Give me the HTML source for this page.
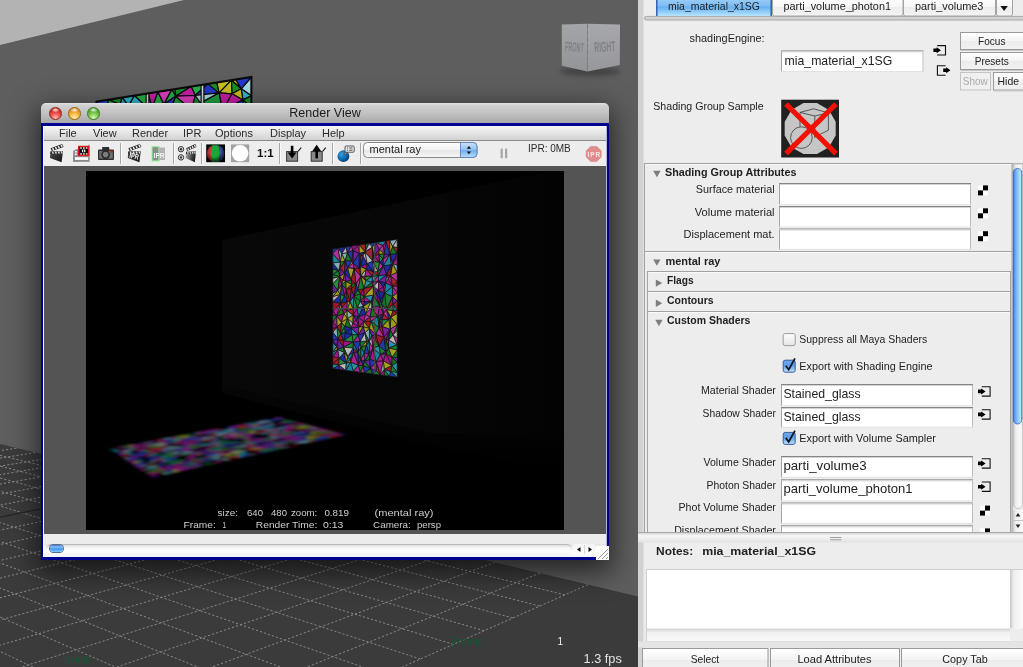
<!DOCTYPE html>
<html><head><meta charset="utf-8">
<style>
html,body{margin:0;padding:0;}
body{width:1023px;height:667px;overflow:hidden;position:relative;background:#ececec;font-family:"Liberation Sans",sans-serif;font-size:11px;color:#222;}
.abs{position:absolute;}
#vp{position:absolute;left:0;top:0;width:638px;height:667px;overflow:hidden;background:#5e5e5e;}
/* ---------- Render View window ---------- */
#rv{position:absolute;left:41px;top:103px;width:568px;height:457px;box-shadow:0 9px 28px 3px rgba(0,0,0,.62);border-radius:5px 5px 0 0;}
#rv .title{position:absolute;left:0;top:0;width:568px;height:20px;border-radius:5px 5px 0 0;background:linear-gradient(#e4e4e4,#d0d0d0 12%,#c2c2c2 50%,#a8a8a8);}
#rv .title .t{position:absolute;left:0;width:568px;top:3px;text-align:center;font-size:12.5px;color:#1a1a1a;}
.tl{position:absolute;top:4px;width:12.6px;height:12.6px;border-radius:50%;box-sizing:border-box;}
#rv .frame{position:absolute;left:0;top:20px;width:568px;height:437px;background:#000092;}
#rv .inner{position:absolute;left:2px;top:3px;width:564px;height:431px;background:#ececec;border-left:1px solid #fff;border-right:1px solid #b4b4d4;box-sizing:border-box;overflow:hidden;}
#rv .menubar{position:absolute;left:0;top:0;width:563px;height:15px;background:linear-gradient(#f6f6f6,#e4e4e4 50%,#d2d2d2);border-bottom:1px solid #8a8a8a;box-sizing:border-box;}
#rv .menubar span{position:absolute;top:1px;font-size:11px;color:#2a2a2a;}
#rv .toolbar{position:absolute;left:0;top:15px;width:563px;height:25px;background:#ededed;}
#rv .sep{position:absolute;top:2px;width:1px;height:21px;background:#a8a8a8;border-right:1px solid #fafafa;}
#rv .canvas{position:absolute;left:0;top:40px;width:563px;height:368px;background:#545454;}
#rv .img{position:absolute;left:42px;top:5px;width:478px;height:359px;background:#000;overflow:hidden;}
#rv .status{position:absolute;margin-top:1.4px;font-size:10px;color:#d0d0d0;white-space:pre;letter-spacing:.35px;}
#rv .bottom{position:absolute;left:0;top:408px;width:563px;height:23px;background:#ececec;}
</style></head>
<body>
<div id="root" style="position:absolute;left:0;top:0;width:1023px;height:667px;opacity:.999;">
<div id="vp">
<svg class="abs" style="left:0;top:0" width="638" height="667" viewBox="0 0 638 667">
  <defs>
    <clipPath id="floorclip"><polygon points="0,444 640,597 640,667 0,667"/></clipPath>
    <linearGradient id="wallg" x1="0" y1="0" x2="1" y2="0"><stop offset="0" stop-color="#5f5f5f"/><stop offset="1" stop-color="#5a5a5a"/></linearGradient>
  </defs>
  <rect x="0" y="0" width="638" height="667" fill="#5e5e5e"/>
  <polygon points="0,0 184,0 0,45" fill="#b3b3b3"/>
  <polygon points="0,444 640,597 640,667 0,667" fill="#3b3b3b"/>
  <g clip-path="url(#floorclip)" stroke="#b8b8b8" stroke-width="1" stroke-dasharray="2.2 2" fill="none" opacity="0.62">
<path d="M610.9 574.5 L-105.5 892.3"/>
<path d="M563.2 563.7 L-184.5 865.4"/>
<path d="M518.5 553.6 L-193.6 817.1"/>
<path d="M476.5 544.1 L-173.4 766.2"/>
<path d="M436.9 535.2 L-181.9 731.6"/>
<path d="M399.6 526.8 L-189.3 701.3"/>
<path d="M364.4 518.8 L-195.9 674.5"/>
<path d="M331.1 511.3 L-180.2 645.0"/>
<path d="M299.5 504.2 L-186.5 624.2"/>
<path d="M269.5 497.4 L-192.2 605.5"/>
<path d="M241.1 491.0 L-197.3 588.4"/>
<path d="M214.0 484.9 L-184.4 569.2"/>
<path d="M163.6 473.5 L-194.0 542.7"/>
<path d="M140.2 468.2 L-198.2 530.9"/>
<path d="M117.7 463.2 L-187.4 517.4"/>
<path d="M96.3 458.3 L-191.5 507.5"/>
<path d="M75.7 453.7 L-195.3 498.3"/>
<path d="M56.0 449.3 L-198.9 489.7"/>
<path d="M37.2 445.0 L-189.5 479.7"/>
<path d="M19.0 440.9 L-193.0 472.3"/>
<path d="M1.6 437.0 L-196.3 465.3"/>
<path d="M-15.1 433.2 L-199.4 458.8"/>
<path d="M-31.3 429.6 L-191.1 451.1"/>
<path d="M-46.8 426.1 L-194.1 445.3"/>
<path d="M564.9 594.9 L-93.6 432.2"/>
<path d="M539.6 606.1 L-118.2 435.4"/>
<path d="M512.8 618.0 L-143.7 438.7"/>
<path d="M484.1 630.7 L-170.0 442.2"/>
<path d="M453.4 644.3 L-197.3 445.7"/>
<path d="M420.4 659.0 L-195.6 459.1"/>
<path d="M385.0 674.7 L-198.5 472.7"/>
<path d="M346.8 691.6 L-196.7 490.1"/>
<path d="M305.5 710.0 L-194.7 510.2"/>
<path d="M260.6 729.9 L-198.2 531.2"/>
<path d="M211.8 751.5 L-195.9 558.9"/>
<path d="M158.4 775.2 L-193.1 592.4"/>
<path d="M99.8 801.2 L-197.7 629.1"/>
<path d="M35.2 829.8 L-194.4 680.3"/>
<path d="M-36.3 861.6 L-190.2 747.0"/>
<path d="M-116.1 897.0 L-196.7 826.8"/>
<path d="M188.2 479.1 L-1913.0 903.6" stroke="#151515" stroke-dasharray="none" stroke-width="1.1" opacity="1"/>
  </g>
<defs><clipPath id="slc"><polygon points="95.6,101.7 251.4,77 251.4,104 95.6,104"/></clipPath></defs>
<g clip-path="url(#slc)" stroke="#0a0a0a" stroke-width="1.2" stroke-linejoin="round">
<polygon points="244.0,200.0 251.4,185.2 251.4,200.0" fill="#28b048"/>
<polygon points="95.6,169.8 95.6,157.5 111.3,165.1" fill="#8a28c8"/>
<polygon points="95.6,190.3 105.4,200.0 95.6,200.0" fill="#8a28c8"/>
<polygon points="109.0,179.9 95.6,169.8 111.3,165.1" fill="#c82030"/>
<polygon points="189.4,148.7 181.8,150.0 176.8,139.2" fill="#e040c0"/>
<polygon points="195.2,95.5 191.1,86.6 207.9,83.9" fill="#28b048"/>
<polygon points="219.2,92.9 195.2,95.5 207.9,83.9" fill="#2238c8"/>
<polygon points="177.6,116.7 169.3,112.8 191.3,109.8" fill="#a8dce4"/>
<polygon points="177.6,116.7 166.0,127.3 169.3,112.8" fill="#18902c"/>
<polygon points="108.8,99.6 105.0,111.7 95.6,101.7" fill="#2a48d8"/>
<polygon points="105.0,111.7 108.8,99.6 120.3,104.5" fill="#28b048"/>
<polygon points="213.8,200.0 203.9,200.0 214.2,188.2" fill="#d028b0"/>
<polygon points="228.2,200.0 213.8,200.0 214.2,188.2" fill="#c82030"/>
<polygon points="162.8,200.0 175.8,185.8 180.6,200.0" fill="#c81fa8"/>
<polygon points="220.4,152.6 229.2,159.8 215.9,158.1" fill="#a8dce4"/>
<polygon points="116.1,188.2 133.1,185.7 127.7,200.0" fill="#1fa040"/>
<polygon points="116.1,188.2 95.6,190.3 109.8,184.4" fill="#d0c828"/>
<polygon points="116.1,188.2 105.4,200.0 95.6,190.3" fill="#28b048"/>
<polygon points="109.0,179.9 95.6,176.8 95.6,169.8" fill="#d0c828"/>
<polygon points="95.6,190.3 95.6,176.8 109.8,184.4" fill="#a8dce4"/>
<polygon points="95.6,176.8 109.0,179.9 109.8,184.4" fill="#8a28c8"/>
<polygon points="133.1,185.7 145.4,189.5 127.7,200.0" fill="#8a28c8"/>
<polygon points="204.3,156.2 220.4,152.6 215.9,158.1" fill="#1fa8c8"/>
<polygon points="216.9,82.5 219.2,92.9 207.9,83.9" fill="#18902c"/>
<polygon points="219.2,92.9 216.9,82.5 231.5,80.2" fill="#c8c020"/>
<polygon points="195.2,95.5 200.6,103.0 191.3,109.8" fill="#18902c"/>
<polygon points="219.2,92.9 200.6,103.0 195.2,95.5" fill="#a8dce4"/>
<polygon points="251.4,95.7 241.2,88.8 251.4,77.0" fill="#a8dce4"/>
<polygon points="241.2,88.8 235.5,79.5 251.4,77.0" fill="#2238c8"/>
<polygon points="241.2,88.8 251.4,95.7 242.9,99.9" fill="#30b8d0"/>
<polygon points="235.5,79.5 241.2,88.8 231.5,80.2" fill="#c8c020"/>
<polygon points="95.6,133.2 105.7,142.8 95.6,145.8" fill="#18902c"/>
<polygon points="189.4,148.7 181.4,160.5 181.8,150.0" fill="#30b8d0"/>
<polygon points="181.8,150.0 167.0,151.2 176.8,139.2" fill="#8a28c8"/>
<polygon points="181.4,160.5 167.0,151.2 181.8,150.0" fill="#c81fa8"/>
<polygon points="160.0,126.1 166.0,127.3 148.5,137.4" fill="#d0c828"/>
<polygon points="166.0,127.3 160.0,126.1 169.3,112.8" fill="#c8c020"/>
<polygon points="160.0,126.1 156.6,111.0 169.3,112.8" fill="#18902c"/>
<polygon points="160.0,126.1 136.1,127.2 139.2,116.2" fill="#c8c020"/>
<polygon points="156.6,111.0 160.0,126.1 139.2,116.2" fill="#28b048"/>
<polygon points="191.1,86.6 175.7,96.2 174.8,89.2" fill="#18902c"/>
<polygon points="175.7,96.2 191.1,86.6 195.2,95.5" fill="#c81fa8"/>
<polygon points="169.3,112.8 175.7,96.2 191.3,109.8" fill="#1fa040"/>
<polygon points="175.7,96.2 195.2,95.5 191.3,109.8" fill="#e040c0"/>
<polygon points="182.3,121.2 177.6,116.7 191.3,109.8" fill="#1fa8c8"/>
<polygon points="166.0,127.3 182.3,121.2 176.8,139.2" fill="#c8c020"/>
<polygon points="177.6,116.7 182.3,121.2 166.0,127.3" fill="#c81fa8"/>
<polygon points="105.0,111.7 95.6,112.3 95.6,101.7" fill="#28b048"/>
<polygon points="95.6,112.3 105.0,111.7 95.6,125.3" fill="#a8dce4"/>
<polygon points="105.0,111.7 112.3,125.2 95.6,125.3" fill="#c81fa8"/>
<polygon points="108.8,99.6 122.0,97.5 120.3,104.5" fill="#18902c"/>
<polygon points="128.7,105.8 122.0,97.5 134.5,95.5" fill="#30b8d0"/>
<polygon points="122.0,97.5 128.7,105.8 120.3,104.5" fill="#1fa8c8"/>
<polygon points="117.5,119.5 105.0,111.7 120.3,104.5" fill="#18902c"/>
<polygon points="117.5,119.5 112.3,125.2 105.0,111.7" fill="#c81fa8"/>
<polygon points="117.5,119.5 136.1,127.2 115.0,129.4" fill="#1fa8c8"/>
<polygon points="112.3,125.2 117.5,119.5 115.0,129.4" fill="#18902c"/>
<polygon points="147.7,107.9 128.7,105.8 134.5,95.5" fill="#30b8d0"/>
<polygon points="128.7,105.8 147.7,107.9 139.2,116.2" fill="#28b048"/>
<polygon points="147.7,107.9 156.6,111.0 139.2,116.2" fill="#c8c020"/>
<polygon points="156.6,111.0 147.7,107.9 152.1,107.6" fill="#c8c020"/>
<polygon points="251.4,95.7 251.4,107.6 242.9,99.9" fill="#18902c"/>
<polygon points="182.9,179.7 181.4,160.5 191.2,176.8" fill="#18902c"/>
<polygon points="205.7,176.8 212.1,177.1 214.2,188.2" fill="#1fa040"/>
<polygon points="212.1,177.1 205.7,176.8 215.9,158.1" fill="#c81fa8"/>
<polygon points="212.1,177.1 228.3,183.8 214.2,188.2" fill="#28b048"/>
<polygon points="228.3,183.8 228.2,200.0 214.2,188.2" fill="#c8c020"/>
<polygon points="228.2,200.0 228.3,183.8 244.0,200.0" fill="#c8c020"/>
<polygon points="251.4,142.7 251.4,162.4 242.6,161.1" fill="#d0c828"/>
<polygon points="251.4,142.7 237.8,141.7 251.4,136.8" fill="#c8c020"/>
<polygon points="237.8,141.7 251.4,142.7 242.6,161.1" fill="#c81fa8"/>
<polygon points="118.7,200.0 116.1,188.2 127.7,200.0" fill="#e040c0"/>
<polygon points="116.1,188.2 118.7,200.0 105.4,200.0" fill="#c82030"/>
<polygon points="145.4,189.5 146.9,200.0 127.7,200.0" fill="#c82030"/>
<polygon points="146.9,200.0 145.4,189.5 154.3,200.0" fill="#28b048"/>
<polygon points="150.9,187.8 162.8,200.0 154.3,200.0" fill="#c81fa8"/>
<polygon points="145.4,189.5 150.9,187.8 154.3,200.0" fill="#c81fa8"/>
<polygon points="146.2,163.2 157.6,161.7 160.1,176.1" fill="#30b8d0"/>
<polygon points="145.4,181.1 145.4,189.5 133.1,185.7" fill="#e040c0"/>
<polygon points="135.0,180.4 145.4,181.1 133.1,185.7" fill="#1fa040"/>
<polygon points="145.4,181.1 150.9,187.8 145.4,189.5" fill="#2a48d8"/>
<polygon points="150.9,187.8 145.4,181.1 160.1,176.1" fill="#c81fa8"/>
<polygon points="145.4,181.1 146.2,163.2 160.1,176.1" fill="#8a28c8"/>
<polygon points="122.4,168.4 109.0,179.9 111.3,165.1" fill="#8a28c8"/>
<polygon points="116.1,188.2 122.9,175.8 133.1,185.7" fill="#18902c"/>
<polygon points="122.9,175.8 135.0,180.4 133.1,185.7" fill="#a8dce4"/>
<polygon points="109.0,179.9 122.9,175.8 109.8,184.4" fill="#18902c"/>
<polygon points="122.9,175.8 116.1,188.2 109.8,184.4" fill="#a8dce4"/>
<polygon points="122.4,168.4 122.9,175.8 109.0,179.9" fill="#2a48d8"/>
<polygon points="199.9,147.6 204.3,156.2 189.4,148.7" fill="#c8c020"/>
<polygon points="204.3,156.2 199.9,147.6 220.4,152.6" fill="#e040c0"/>
<polygon points="199.9,147.6 227.4,137.5 220.4,152.6" fill="#d028b0"/>
<polygon points="219.6,129.3 199.9,147.6 202.7,131.2" fill="#c8c020"/>
<polygon points="199.9,147.6 219.6,129.3 227.4,137.5" fill="#c81fa8"/>
<polygon points="207.1,117.7 219.6,129.3 202.7,131.2" fill="#8a28c8"/>
<polygon points="232.1,93.8 219.2,92.9 231.5,80.2" fill="#c8c020"/>
<polygon points="241.2,88.8 232.1,93.8 231.5,80.2" fill="#18902c"/>
<polygon points="232.1,93.8 241.2,88.8 242.9,99.9" fill="#c8c020"/>
<polygon points="110.5,151.6 95.6,157.5 95.6,145.8" fill="#28b048"/>
<polygon points="105.7,142.8 110.5,151.6 95.6,145.8" fill="#2238c8"/>
<polygon points="95.6,157.5 110.5,151.6 111.3,165.1" fill="#18902c"/>
<polygon points="116.3,139.6 110.5,151.6 105.7,142.8" fill="#18902c"/>
<polygon points="136.1,127.2 116.3,139.6 115.0,129.4" fill="#d0c828"/>
<polygon points="116.3,139.6 105.7,142.8 115.0,129.4" fill="#28b048"/>
<polygon points="157.6,161.7 167.4,166.2 160.1,176.1" fill="#8a28c8"/>
<polygon points="167.4,166.2 167.0,151.2 181.4,160.5" fill="#c81fa8"/>
<polygon points="204.3,156.2 196.0,163.5 189.4,148.7" fill="#d028b0"/>
<polygon points="196.0,163.5 181.4,160.5 189.4,148.7" fill="#1fa8c8"/>
<polygon points="181.4,160.5 196.0,163.5 191.2,176.8" fill="#30b8d0"/>
<polygon points="196.0,163.5 205.7,176.8 191.2,176.8" fill="#d028b0"/>
<polygon points="196.0,163.5 204.3,156.2 215.9,158.1" fill="#d028b0"/>
<polygon points="205.7,176.8 196.0,163.5 215.9,158.1" fill="#c81fa8"/>
<polygon points="167.0,151.2 167.8,138.1 176.8,139.2" fill="#d0c828"/>
<polygon points="167.8,138.1 166.0,127.3 176.8,139.2" fill="#8a28c8"/>
<polygon points="166.0,127.3 167.8,138.1 148.5,137.4" fill="#d028b0"/>
<polygon points="159.1,156.7 146.2,163.2 143.1,157.9" fill="#a8dce4"/>
<polygon points="146.2,163.2 159.1,156.7 157.6,161.7" fill="#18902c"/>
<polygon points="159.1,156.7 167.4,166.2 157.6,161.7" fill="#c81fa8"/>
<polygon points="167.4,166.2 159.1,156.7 167.0,151.2" fill="#1fa040"/>
<polygon points="146.1,133.4 160.0,126.1 148.5,137.4" fill="#1fa040"/>
<polygon points="160.0,126.1 146.1,133.4 136.1,127.2" fill="#1fa8c8"/>
<polygon points="175.7,96.2 171.8,89.6 174.8,89.2" fill="#1fa040"/>
<polygon points="157.9,91.8 163.9,104.2 152.1,107.6" fill="#28b048"/>
<polygon points="163.9,104.2 156.6,111.0 152.1,107.6" fill="#c8c020"/>
<polygon points="171.8,89.6 163.9,104.2 157.9,91.8" fill="#e040c0"/>
<polygon points="163.9,104.2 171.8,89.6 175.7,96.2" fill="#28b048"/>
<polygon points="156.6,111.0 163.9,104.2 169.3,112.8" fill="#2238c8"/>
<polygon points="163.9,104.2 175.7,96.2 169.3,112.8" fill="#2238c8"/>
<polygon points="182.3,121.2 194.0,127.2 176.8,139.2" fill="#8a28c8"/>
<polygon points="194.0,127.2 207.1,117.7 202.7,131.2" fill="#2238c8"/>
<polygon points="108.4,128.5 95.6,133.2 95.6,125.3" fill="#d028b0"/>
<polygon points="112.3,125.2 108.4,128.5 95.6,125.3" fill="#2a48d8"/>
<polygon points="108.4,128.5 112.3,125.2 115.0,129.4" fill="#c81fa8"/>
<polygon points="105.7,142.8 108.4,128.5 115.0,129.4" fill="#1fa040"/>
<polygon points="108.4,128.5 105.7,142.8 95.6,133.2" fill="#a8dce4"/>
<polygon points="128.7,105.8 128.2,116.1 120.3,104.5" fill="#d028b0"/>
<polygon points="128.2,116.1 117.5,119.5 120.3,104.5" fill="#30b8d0"/>
<polygon points="128.2,116.1 128.7,105.8 139.2,116.2" fill="#c81fa8"/>
<polygon points="136.1,127.2 128.2,116.1 139.2,116.2" fill="#1fa040"/>
<polygon points="117.5,119.5 128.2,116.1 136.1,127.2" fill="#a8dce4"/>
<polygon points="148.0,93.4 147.7,107.9 134.5,95.5" fill="#28b048"/>
<polygon points="148.0,93.4 157.9,91.8 152.1,107.6" fill="#c81fa8"/>
<polygon points="147.7,107.9 148.0,93.4 152.1,107.6" fill="#8a28c8"/>
<polygon points="235.7,135.7 251.4,122.9 251.4,136.8" fill="#d028b0"/>
<polygon points="237.8,141.7 235.7,135.7 251.4,136.8" fill="#d0c828"/>
<polygon points="235.7,135.7 237.8,141.7 227.4,137.5" fill="#18902c"/>
<polygon points="219.6,129.3 235.7,135.7 227.4,137.5" fill="#18902c"/>
<polygon points="229.2,159.8 228.7,146.9 242.6,161.1" fill="#c82030"/>
<polygon points="228.7,146.9 237.8,141.7 242.6,161.1" fill="#c82030"/>
<polygon points="228.7,146.9 229.2,159.8 220.4,152.6" fill="#c81fa8"/>
<polygon points="227.4,137.5 228.7,146.9 220.4,152.6" fill="#28b048"/>
<polygon points="237.8,141.7 228.7,146.9 227.4,137.5" fill="#c8c020"/>
<polygon points="251.4,107.6 243.6,117.0 242.9,99.9" fill="#28b048"/>
<polygon points="243.6,117.0 251.4,107.6 251.4,122.9" fill="#c8c020"/>
<polygon points="235.7,135.7 243.6,117.0 251.4,122.9" fill="#1fa8c8"/>
<polygon points="203.9,200.0 198.8,186.9 214.2,188.2" fill="#30b8d0"/>
<polygon points="198.8,186.9 205.7,176.8 214.2,188.2" fill="#d028b0"/>
<polygon points="205.7,176.8 198.8,186.9 191.2,176.8" fill="#1fa8c8"/>
<polygon points="243.5,180.8 251.4,185.2 244.0,200.0" fill="#30b8d0"/>
<polygon points="228.3,183.8 243.5,180.8 244.0,200.0" fill="#c8c020"/>
<polygon points="228.2,175.3 228.3,183.8 212.1,177.1" fill="#28b048"/>
<polygon points="228.2,175.3 212.1,177.1 215.9,158.1" fill="#1fa8c8"/>
<polygon points="229.2,159.8 228.2,175.3 215.9,158.1" fill="#c82030"/>
<polygon points="164.8,183.3 175.8,185.8 162.8,200.0" fill="#e040c0"/>
<polygon points="150.9,187.8 164.8,183.3 162.8,200.0" fill="#a8dce4"/>
<polygon points="164.8,183.3 150.9,187.8 160.1,176.1" fill="#2238c8"/>
<polygon points="164.8,183.3 182.9,179.7 175.8,185.8" fill="#28b048"/>
<polygon points="133.5,166.8 145.4,181.1 135.0,180.4" fill="#c81fa8"/>
<polygon points="145.4,181.1 133.5,166.8 146.2,163.2" fill="#d0c828"/>
<polygon points="122.9,175.8 133.5,166.8 135.0,180.4" fill="#d028b0"/>
<polygon points="133.5,166.8 122.9,175.8 122.4,168.4" fill="#c81fa8"/>
<polygon points="146.2,163.2 133.5,166.8 143.1,157.9" fill="#d028b0"/>
<polygon points="133.5,166.8 135.0,151.5 143.1,157.9" fill="#1fa040"/>
<polygon points="133.5,166.8 122.4,168.4 135.0,151.5" fill="#e040c0"/>
<polygon points="200.6,103.0 203.3,112.5 191.3,109.8" fill="#1fa8c8"/>
<polygon points="194.0,127.2 203.3,112.5 207.1,117.7" fill="#a8dce4"/>
<polygon points="203.3,112.5 182.3,121.2 191.3,109.8" fill="#e040c0"/>
<polygon points="203.3,112.5 194.0,127.2 182.3,121.2" fill="#18902c"/>
<polygon points="128.0,144.4 146.1,133.4 148.5,137.4" fill="#d0c828"/>
<polygon points="128.0,144.4 116.3,139.6 136.1,127.2" fill="#1fa040"/>
<polygon points="146.1,133.4 128.0,144.4 136.1,127.2" fill="#c81fa8"/>
<polygon points="167.4,166.2 167.8,172.2 160.1,176.1" fill="#a8dce4"/>
<polygon points="167.8,172.2 164.8,183.3 160.1,176.1" fill="#c81fa8"/>
<polygon points="164.8,183.3 167.8,172.2 182.9,179.7" fill="#28b048"/>
<polygon points="182.9,179.7 167.8,172.2 181.4,160.5" fill="#8a28c8"/>
<polygon points="167.8,172.2 167.4,166.2 181.4,160.5" fill="#1fa8c8"/>
<polygon points="151.0,145.4 159.1,156.7 143.1,157.9" fill="#1fa040"/>
<polygon points="135.0,151.5 151.0,145.4 143.1,157.9" fill="#d028b0"/>
<polygon points="159.1,156.7 151.0,145.4 167.0,151.2" fill="#18902c"/>
<polygon points="151.0,145.4 128.0,144.4 148.5,137.4" fill="#2a48d8"/>
<polygon points="128.0,144.4 151.0,145.4 135.0,151.5" fill="#28b048"/>
<polygon points="167.8,138.1 151.0,145.4 148.5,137.4" fill="#a8dce4"/>
<polygon points="151.0,145.4 167.8,138.1 167.0,151.2" fill="#c82030"/>
<polygon points="194.0,127.2 194.8,136.2 176.8,139.2" fill="#1fa8c8"/>
<polygon points="194.8,136.2 194.0,127.2 202.7,131.2" fill="#c8c020"/>
<polygon points="194.8,136.2 189.4,148.7 176.8,139.2" fill="#d0c828"/>
<polygon points="199.9,147.6 194.8,136.2 202.7,131.2" fill="#c82030"/>
<polygon points="194.8,136.2 199.9,147.6 189.4,148.7" fill="#a8dce4"/>
<polygon points="225.8,121.9 235.7,135.7 219.6,129.3" fill="#a8dce4"/>
<polygon points="225.8,121.9 243.6,117.0 235.7,135.7" fill="#28b048"/>
<polygon points="187.4,200.0 198.8,186.9 203.9,200.0" fill="#c82030"/>
<polygon points="243.5,180.8 251.4,175.8 251.4,185.2" fill="#c8c020"/>
<polygon points="238.6,174.5 243.5,180.8 228.3,183.8" fill="#8a28c8"/>
<polygon points="228.2,175.3 238.6,174.5 228.3,183.8" fill="#c82030"/>
<polygon points="238.6,174.5 251.4,175.8 243.5,180.8" fill="#c81fa8"/>
<polygon points="238.6,174.5 229.2,159.8 242.6,161.1" fill="#2a48d8"/>
<polygon points="238.6,174.5 228.2,175.3 229.2,159.8" fill="#2238c8"/>
<polygon points="251.4,175.8 238.6,174.5 251.4,162.4" fill="#a8dce4"/>
<polygon points="251.4,162.4 238.6,174.5 242.6,161.1" fill="#d028b0"/>
<polygon points="222.6,110.6 200.6,103.0 219.2,92.9" fill="#1fa040"/>
<polygon points="232.1,93.8 222.6,110.6 219.2,92.9" fill="#c81fa8"/>
<polygon points="222.6,110.6 232.1,93.8 242.9,99.9" fill="#c81fa8"/>
<polygon points="243.6,117.0 222.6,110.6 242.9,99.9" fill="#2238c8"/>
<polygon points="225.8,121.9 222.6,110.6 243.6,117.0" fill="#2a48d8"/>
<polygon points="116.3,139.6 118.9,151.3 110.5,151.6" fill="#2a48d8"/>
<polygon points="128.0,144.4 118.9,151.3 116.3,139.6" fill="#c81fa8"/>
<polygon points="118.9,151.3 128.0,144.4 135.0,151.5" fill="#18902c"/>
<polygon points="110.5,151.6 118.9,151.3 111.3,165.1" fill="#18902c"/>
<polygon points="118.9,151.3 122.4,168.4 111.3,165.1" fill="#c82030"/>
<polygon points="122.4,168.4 118.9,151.3 135.0,151.5" fill="#c81fa8"/>
<polygon points="188.3,184.2 187.4,200.0 180.6,200.0" fill="#8a28c8"/>
<polygon points="175.8,185.8 188.3,184.2 180.6,200.0" fill="#18902c"/>
<polygon points="187.4,200.0 188.3,184.2 198.8,186.9" fill="#c8c020"/>
<polygon points="182.9,179.7 188.3,184.2 175.8,185.8" fill="#8a28c8"/>
<polygon points="188.3,184.2 182.9,179.7 191.2,176.8" fill="#d0c828"/>
<polygon points="198.8,186.9 188.3,184.2 191.2,176.8" fill="#e040c0"/>
<polygon points="203.3,112.5 211.0,114.5 207.1,117.7" fill="#e040c0"/>
<polygon points="211.0,114.5 203.3,112.5 200.6,103.0" fill="#1fa040"/>
<polygon points="222.6,110.6 211.0,114.5 200.6,103.0" fill="#2a48d8"/>
<polygon points="219.9,116.8 222.6,110.6 225.8,121.9" fill="#28b048"/>
<polygon points="219.9,116.8 211.0,114.5 222.6,110.6" fill="#2238c8"/>
<polygon points="211.0,114.5 219.9,116.8 207.1,117.7" fill="#d028b0"/>
<polygon points="207.1,117.7 219.9,116.8 219.6,129.3" fill="#c82030"/>
<polygon points="219.9,116.8 225.8,121.9 219.6,129.3" fill="#a8dce4"/>
<path d="M147.5,80 V104 M202.5,80 V104" stroke="#0a0a0a" stroke-width="4"/><path d="M147.5,80 V104 M202.5,80 V104" stroke="#d8d8d8" stroke-width="1.6"/>
</g>
<path d="M95.6,101.7 L251.4,77 V104" fill="none" stroke="#0a0a0a" stroke-width="2"/>
</svg>
<svg class="abs" style="left:540px;top:10px" width="98" height="80" viewBox="540 10 98 80">
<defs>
<linearGradient id="vcl" x1="0" y1="0" x2="0" y2="1"><stop offset="0" stop-color="#a4a5a9"/><stop offset="1" stop-color="#939498"/></linearGradient>
<linearGradient id="vcr" x1="0" y1="0" x2="0" y2="1"><stop offset="0" stop-color="#a7a8ac"/><stop offset="1" stop-color="#96979b"/></linearGradient>
<filter id="vcb" x="-30%" y="-100%" width="160%" height="300%"><feGaussianBlur stdDeviation="2.6"/></filter>
</defs>
<ellipse cx="590" cy="71.5" rx="31" ry="4.2" fill="#3c3c3c" opacity=".85" filter="url(#vcb)"/>
<polygon points="561.8,24.6 587.5,23.8 587.5,71.6 561.8,65.8" fill="url(#vcl)"/>
<polygon points="587.5,23.8 620,24.6 619.8,65 587.5,71.6" fill="url(#vcr)"/>
<path d="M587.5,24 V71.4" stroke="#7c7d82" stroke-width="1" stroke-dasharray="5 1.5"/>
<text x="565" y="51.8" font-family="Liberation Sans" font-weight="bold" font-size="13.6" fill="#7f8085" textLength="19" lengthAdjust="spacingAndGlyphs" transform="rotate(4 575 48)">FRONT</text>
<text x="594.4" y="51.6" font-family="Liberation Sans" font-weight="bold" font-size="14.4" fill="#7f8085" textLength="21" lengthAdjust="spacingAndGlyphs" transform="rotate(-3 605 48)">RIGHT</text>
</svg>

<svg class="abs" style="left:0;top:620px" width="638" height="47" viewBox="0 620 638 47" font-family="Liberation Sans">
<text x="67" y="663" font-size="10" fill="#0e5a32" textLength="23.5" lengthAdjust="spacingAndGlyphs">persp</text>
<text x="451.6" y="644.6" font-size="10" fill="#0e5a32" textLength="31.6" lengthAdjust="spacingAndGlyphs">Frame:</text>
<text x="557.4" y="644.6" font-size="10" fill="#f2f2f2">1</text>
<text x="583.6" y="663.2" font-size="13.4" fill="#e4e4e4" textLength="38.2" lengthAdjust="spacingAndGlyphs">1.3 fps</text>
</svg>

</div>

<div id="rv">
  <div class="title">
    <div class="tl" style="left:8px;background:radial-gradient(ellipse 4px 2.4px at 50% 18%,rgba(255,255,255,.9),rgba(255,255,255,0) 100%),radial-gradient(circle at 50% 88%,#ffb8b0 0,#ee4a44 45%,#b01510 100%);border:1px solid #8e2a24;"></div>
    <div class="tl" style="left:27px;background:radial-gradient(ellipse 4px 2.4px at 50% 18%,rgba(255,255,255,.9),rgba(255,255,255,0) 100%),radial-gradient(circle at 50% 88%,#fff4a8 0,#f5b43c 45%,#c47414 100%);border:1px solid #9a6418;"></div>
    <div class="tl" style="left:46px;background:radial-gradient(ellipse 4px 2.4px at 50% 18%,rgba(255,255,255,.9),rgba(255,255,255,0) 100%),radial-gradient(circle at 50% 88%,#dcfab0 0,#78c44c 45%,#38881c 100%);border:1px solid #3e7a24;"></div>
    <div class="t">Render View</div>
  </div>
  <div class="frame"><div class="inner">
    <div class="menubar">
      <span style="left:15px">File</span><span style="left:49px">View</span><span style="left:88px">Render</span><span style="left:139px">IPR</span><span style="left:171px">Options</span><span style="left:226px">Display</span><span style="left:278px">Help</span>
    </div>
    <div class="toolbar">
<svg class="abs" style="left:0;top:0" width="563" height="25" viewBox="44 141 563 25">
  <defs>
    <linearGradient id="clapg2" x1="0" y1="0" x2="1" y2=".3"><stop offset="0" stop-color="#b8b8b8"/><stop offset=".6" stop-color="#555"/><stop offset="1" stop-color="#1a1a1a"/></linearGradient>
    <linearGradient id="clapg" x1="0" y1="0" x2="1" y2="1"><stop offset="0" stop-color="#4a4a4a"/><stop offset="1" stop-color="#141414"/></linearGradient>
    <radialGradient id="blueball" cx=".35" cy=".35" r=".7"><stop offset="0" stop-color="#3aa0e0"/><stop offset=".6" stop-color="#0a68b0"/><stop offset="1" stop-color="#043a70"/></radialGradient>
    <radialGradient id="ballshade" cx=".45" cy=".4" r=".6"><stop offset=".5" stop-color="#000" stop-opacity="0"/><stop offset="1" stop-color="#000" stop-opacity=".75"/></radialGradient>
    <clipPath id="ballclip"><circle cx="215.5" cy="153.3" r="8.6"/></clipPath>
    <linearGradient id="ddg" x1="0" y1="0" x2="0" y2="1"><stop offset="0" stop-color="#fefefe"/><stop offset=".5" stop-color="#f2f2f2"/><stop offset=".5" stop-color="#e6e6e6"/><stop offset="1" stop-color="#f6f6f6"/></linearGradient>
    <linearGradient id="ddb" x1="0" y1="0" x2="0" y2="1"><stop offset="0" stop-color="#cfe4fa"/><stop offset=".5" stop-color="#8fbff2"/><stop offset=".5" stop-color="#6facee"/><stop offset="1" stop-color="#b6dcfc"/></linearGradient>
    <g id="clap">
      <polygon points="0.5,7.6 12.9,7.4 11.6,18.2 0,13.9" fill="url(#clapg)"/>
      <polygon points="0.6,4.2 12.1,0 13.6,2.9 1.9,7" fill="#262626"/>
      <path d="M2.6,4.2 L3.8,6.3 M5.4,3.1 L6.6,5.2 M8.2,2 L9.4,4.1 M11,0.9 L12.2,3" stroke="#ececec" stroke-width="1.5"/>
      <polygon points="0.5,7.6 12.9,7.4 12.7,9.6 0.4,9.9" fill="#2c2c2c"/>
      <path d="M2.4,7.7 L3.4,9.7 M5.4,7.6 L6.4,9.6 M8.4,7.6 L9.4,9.6 M11.2,7.5 L12.2,9.5" stroke="#e4e4e4" stroke-width="1.4"/>
    </g>
  </defs>
  <!-- 1 clapper -->
  <use href="#clap" x="50" y="144"/>
  <!-- 2 film + red box -->
  <polygon points="73.2,150.8 78.4,148.4 78.4,161.8 73.2,161.8" fill="#8a8a8a"/>
  <rect x="73.2" y="155.6" width="16.3" height="6.2" fill="#8a8a8a"/>
  <polygon points="89.5,144.2 89.5,161.8 88.2,161.8 88.2,145" fill="#9a9a9a"/>
  <rect x="74.9" y="157.2" width="13.1" height="2.7" fill="#fff"/>
  <rect x="74.9" y="151" width="1.9" height="1.6" fill="#f4f4f4"/><rect x="74.9" y="153.5" width="1.9" height="1.6" fill="#f4f4f4"/>
  <rect x="78.2" y="145.9" width="11" height="10.1" fill="#0c0c0c"/>
  <path d="M80.2,148 h1.7 M83,148 h1.7 M85.8,148 h1.7 M80.2,154 h1.7 M83,154 h1.7 M85.8,154 h1.7" stroke="#f4f4f4" stroke-width="1.6"/>
  <path d="M82,149.6 h3.4 v2.6 h-3.4 z" fill="#f4f4f4"/><path d="M83.6,149.6 v2.6" stroke="#0c0c0c" stroke-width=".9"/>
  <rect x="78.8" y="146.5" width="9.8" height="8.9" fill="none" stroke="#f01616" stroke-width="1.3"/>
  <!-- 3 camera -->
  <rect x="98" y="149.4" width="16" height="10.6" rx="1" fill="#2e2e2e"/>
  <rect x="102.2" y="147" width="7" height="3.2" fill="#2e2e2e"/>
  <rect x="99.2" y="151" width="13.6" height="7.6" fill="#6e6e6e"/>
  <circle cx="105.6" cy="154.6" r="4.3" fill="#242424"/>
  <circle cx="105.6" cy="154.6" r="2.8" fill="#7c7c7c"/>
  <rect x="110.4" y="150.4" width="2.2" height="2" fill="#e01010"/>
  <!-- 4 IPR clapper -->
  <use href="#clap" x="127.8" y="144"/>
  <text x="129.2" y="158.4" font-family="Liberation Sans" font-weight="bold" font-size="7.6" fill="#f2f2f2" textLength="9.4" lengthAdjust="spacingAndGlyphs" transform="rotate(12 133 157)">IPR</text>
  <!-- 5 IPR gray -->
  <rect x="152.2" y="147" width="6.4" height="13.6" fill="#8c8c8c"/>
  <rect x="158.6" y="147.6" width="6.4" height="12.4" fill="#b4b4b4"/>
  <rect x="152.2" y="146.8" width="6.8" height="14" fill="none" stroke="#7ee07e" stroke-width="1"/>
  <text x="153.6" y="158.3" font-family="Liberation Sans" font-weight="bold" font-size="7.7" fill="#f4f4f4" textLength="11" lengthAdjust="spacingAndGlyphs">IPR</text>
  <!-- 6 circles + clapper -->
  <circle cx="181" cy="149.2" r="2.7" fill="#e8e8e8" stroke="#333" stroke-width="1"/><circle cx="181" cy="149.2" r="1.2" fill="#333"/>
  <circle cx="181" cy="157.4" r="2.7" fill="#e8e8e8" stroke="#333" stroke-width="1"/><circle cx="181" cy="157.4" r="1.2" fill="#333"/>
  <g transform="translate(185.6 144.1) scale(.8 1)">
      <polygon points="0.5,7.6 12.9,7.4 11.6,18.2 0,13.9" fill="url(#clapg2)"/>
      <polygon points="0.6,4.2 12.1,0 13.6,2.9 1.9,7" fill="#2a2a2a"/>
      <path d="M2.6,4.2 L3.8,6.3 M5.4,3.1 L6.6,5.2 M8.2,2 L9.4,4.1 M11,0.9 L12.2,3" stroke="#ececec" stroke-width="1.5"/>
      <polygon points="0.5,7.6 12.9,7.4 12.7,9.6 0.4,9.9" fill="#3a3a3a"/>
      <path d="M2.4,7.7 L3.4,9.7 M5.4,7.6 L6.4,9.6 M8.4,7.6 L9.4,9.6 M11.2,7.5 L12.2,9.5" stroke="#e4e4e4" stroke-width="1.4"/></g>
  <!-- 7 rgb ball -->
  <rect x="206.2" y="144.4" width="18.8" height="17.8" fill="#000"/>
  <g clip-path="url(#ballclip)">
    <rect x="206" y="144" width="7" height="19" fill="#c83838"/>
    <path d="M212.6,144 Q209.4,153 212.6,163 L218.4,163 Q221.4,153 218.4,144 Z" fill="#18a838"/>
    <path d="M218.4,144 Q221.4,153 218.4,163 L226,163 L226,144 Z" fill="#4858c0"/>
    <circle cx="215.5" cy="153.3" r="8.6" fill="url(#ballshade)"/>
  </g>
  <!-- 8 white circle -->
  <rect x="231" y="144.4" width="18.2" height="17.8" fill="#a2a2a2"/>
  <circle cx="240.1" cy="153.3" r="8.3" fill="#fff"/>
  <!-- 9 1:1 -->
  <text x="257" y="157.4" font-family="Liberation Sans" font-weight="bold" font-size="11.5" fill="#111">1:1</text>
  <!-- 10 down-arrow box -->
  <rect x="286.6" y="151.6" width="11" height="9.6" fill="#8a8a8a" stroke="#333" stroke-width="1"/>
  <path d="M298,151.4 L301.2,147.6" stroke="#222" stroke-width="1.2"/>
  <path d="M292.1,145.8 V154" stroke="#000" stroke-width="2.6"/>
  <polygon points="287.8,152.6 296.4,152.6 292.1,158.6" fill="#000"/>
  <!-- 11 up-arrow box -->
  <rect x="311.2" y="151.6" width="11" height="9.6" fill="#8a8a8a" stroke="#333" stroke-width="1"/>
  <path d="M322.6,151.4 L325.8,147.6" stroke="#222" stroke-width="1.2"/>
  <path d="M316.7,150 V158.4" stroke="#000" stroke-width="2.6"/>
  <polygon points="312.2,151.2 321.2,151.2 316.7,144.8" fill="#000"/>
  <!-- 12 blue ball + bubble -->
  <circle cx="343.4" cy="156.2" r="5.9" fill="url(#blueball)"/>
  <path d="M345.6,152.2 L343.6,155.4 L348,152.2 Z" fill="#e8e8e8" stroke="#444" stroke-width=".8"/>
  <rect x="345" y="146" width="9.2" height="6.2" rx="1" fill="#f4f4f4" stroke="#444" stroke-width=".9"/>
  <path d="M346.8,148 h1.4 M349.2,148 h3.4 M346.8,150.2 h1.4 M349.2,150.2 h3.4" stroke="#333" stroke-width=".9"/>
  <!-- 13 dropdown -->
  <rect x="363.5" y="142.5" width="113.5" height="15" rx="4" fill="url(#ddg)" stroke="#8a8a8a" stroke-width="1"/>
  <path d="M460.5,142.5 H473 Q477,142.5 477,146.5 V153.5 Q477,157.5 473,157.5 H460.5 Z" fill="url(#ddb)" stroke="#5078b8" stroke-width=".8"/>
  <polygon points="466.7,148.7 471.1,148.7 468.9,145.9" fill="#111"/>
  <polygon points="466.7,151.5 471.1,151.5 468.9,154.3" fill="#111"/>
  <text x="369.6" y="153.4" font-family="Liberation Sans" font-size="11" fill="#1a1a1a">mental ray</text>
  <!-- pause -->
  <rect x="500.6" y="148.6" width="2.2" height="9.6" fill="#a6a6a6"/><rect x="505" y="148.6" width="2.2" height="9.6" fill="#a6a6a6"/>
  <text x="528" y="151.8" font-family="Liberation Sans" font-size="10" fill="#2a2a2a">IPR: 0MB</text>
  <!-- IPR stop -->
  <polygon points="590.6,146.4 596.8,146.4 601.2,150.8 601.2,157 596.8,161.4 590.6,161.4 586.2,157 586.2,150.8" fill="#e08c8c" stroke="#d87878" stroke-width=".5"/>
  <text x="587.4" y="156.6" font-family="Liberation Sans" font-weight="bold" font-size="6.4" fill="#f6eaea" textLength="12.6">IPR</text>
  <!-- separators -->
  <g stroke="#a6a6a6" stroke-width="1"><path d="M120.5,143 V164 M173.5,143 V164 M201.5,143 V164 M279.5,143 V164 M332.5,143 V164 M360.5,143 V164"/></g>
  <g stroke="#fbfbfb" stroke-width="1"><path d="M121.5,143 V164 M174.5,143 V164 M202.5,143 V164 M280.5,143 V164 M333.5,143 V164 M361.5,143 V164"/></g>
</svg>

    </div>
    <div class="canvas">
      <div class="img"><div class="abs" style="left:-1px;top:0;width:479px;height:359px;">
<svg class="abs" style="left:0;top:0" width="479" height="359" viewBox="0 0 479 359">
<defs>
<filter id="b1" x="-10%" y="-10%" width="120%" height="120%"><feGaussianBlur stdDeviation=".7"/></filter>
<filter id="b2" x="-10%" y="-20%" width="120%" height="140%"><feGaussianBlur stdDeviation="1.9 .9"/></filter>
<filter id="b3" x="-10%" y="-10%" width="120%" height="120%"><feGaussianBlur stdDeviation="6"/></filter>
<linearGradient id="wallb" x1="0" y1="0" x2="0" y2="1"><stop offset="0" stop-color="#060606"/><stop offset="1" stop-color="#000"/></linearGradient>
<linearGradient id="wallr" x1="0" y1="0" x2="1" y2="0"><stop offset="0" stop-color="#080808"/><stop offset=".6" stop-color="#060606"/><stop offset="1" stop-color="#030303"/></linearGradient>
</defs>
<polygon points="137,69 479,-3 479,262 345,262 137,215" fill="url(#wallr)"/>
<polygon points="137,215 345,262 479,262 479,300 345,275 137,222" fill="url(#wallb)"/>
<g filter="url(#b1)"><g stroke="#141414" stroke-width=".7" stroke-linejoin="round">
<polygon points="273.1,146.3 272.4,136.8 278.5,135.2" fill="#1886a0"/>
<polygon points="272.4,136.8 273.1,146.3 268.0,144.0" fill="#a01886"/>
<polygon points="273.1,146.3 271.1,149.0 268.0,144.0" fill="#2139ac"/>
<polygon points="261.2,118.3 262.3,130.7 259.7,124.6" fill="#2693a6"/>
<polygon points="290.2,71.7 301.1,70.0 298.2,74.5" fill="#1886a0"/>
<polygon points="304.3,205.1 305.6,200.4 312.2,206.2" fill="#2139ac"/>
<polygon points="305.6,200.4 312.2,201.2 312.2,206.2" fill="#2693a6"/>
<polygon points="247.8,103.4 247.8,98.0 253.8,99.6" fill="#208c39"/>
<polygon points="256.9,82.6 252.8,77.3 260.9,76.0" fill="#1b2ca0"/>
<polygon points="286.0,130.5 279.2,130.7 279.1,125.5" fill="#a6208c"/>
<polygon points="288.5,124.1 286.0,130.5 279.1,125.5" fill="#2693a6"/>
<polygon points="279.2,130.7 286.0,130.5 278.5,135.2" fill="#1b2ca0"/>
<polygon points="271.1,149.0 267.8,152.1 268.0,144.0" fill="#a6208c"/>
<polygon points="267.8,152.1 262.4,147.5 268.0,144.0" fill="#a6a020"/>
<polygon points="258.6,170.0 260.3,161.7 267.1,163.7" fill="#1b2ca0"/>
<polygon points="272.4,136.8 275.1,130.0 278.5,135.2" fill="#86b0b6"/>
<polygon points="275.1,130.0 279.2,130.7 278.5,135.2" fill="#a01886"/>
<polygon points="279.2,130.7 275.1,130.0 279.1,125.5" fill="#a01886"/>
<polygon points="275.1,130.0 275.5,123.1 279.1,125.5" fill="#188033"/>
<polygon points="275.5,123.1 278.9,117.6 279.1,125.5" fill="#a01886"/>
<polygon points="287.1,111.2 278.9,117.6 280.7,109.4" fill="#2693a6"/>
<polygon points="278.9,117.6 275.7,105.1 280.7,109.4" fill="#a09919"/>
<polygon points="268.0,137.7 272.4,136.8 268.0,144.0" fill="#a6208c"/>
<polygon points="265.1,130.4 262.3,130.7 261.2,118.3" fill="#a01926"/>
<polygon points="251.7,175.7 247.8,169.2 253.0,167.8" fill="#6e20a0"/>
<polygon points="262.0,139.4 262.4,147.5 258.9,142.8" fill="#a6a020"/>
<polygon points="256.6,136.3 262.0,139.4 258.9,142.8" fill="#a01886"/>
<polygon points="262.0,139.4 256.6,136.3 262.3,130.7" fill="#a01886"/>
<polygon points="265.1,130.4 262.0,139.4 262.3,130.7" fill="#a6a020"/>
<polygon points="262.0,139.4 265.1,130.4 268.0,137.7" fill="#a6a020"/>
<polygon points="262.4,147.5 262.0,139.4 268.0,144.0" fill="#86b0b6"/>
<polygon points="262.0,139.4 268.0,137.7 268.0,144.0" fill="#a6202c"/>
<polygon points="294.3,78.2 290.2,71.7 298.2,74.5" fill="#b33399"/>
<polygon points="301.1,70.0 299.4,83.1 298.2,74.5" fill="#a01886"/>
<polygon points="305.0,83.5 299.4,83.1 301.1,70.0" fill="#2139ac"/>
<polygon points="299.4,83.1 294.3,78.2 298.2,74.5" fill="#b33399"/>
<polygon points="288.5,100.8 292.9,100.5 293.2,105.0" fill="#a6202c"/>
<polygon points="292.9,100.5 287.6,90.1 294.7,91.3" fill="#208c39"/>
<polygon points="287.6,90.1 292.9,100.5 288.5,100.8" fill="#b9b9b9"/>
<polygon points="312.2,121.7 312.2,130.0 307.4,125.6" fill="#a6a020"/>
<polygon points="299.2,198.3 304.3,205.1 299.1,204.5" fill="#188033"/>
<polygon points="304.3,205.1 299.2,198.3 305.6,200.4" fill="#2693a6"/>
<polygon points="291.3,190.7 284.7,188.3 287.9,176.8" fill="#a01886"/>
<polygon points="275.1,170.3 276.0,176.3 272.8,181.4" fill="#86b0b6"/>
<polygon points="276.0,176.3 281.6,173.8 279.2,182.1" fill="#188033"/>
<polygon points="312.2,186.5 312.2,191.2 306.8,186.5" fill="#6e20a0"/>
<polygon points="312.2,179.0 312.2,186.5 306.8,186.5" fill="#137323"/>
<polygon points="312.2,201.2 306.8,194.4 312.2,191.2" fill="#2693a6"/>
<polygon points="306.8,194.4 312.2,201.2 305.6,200.4" fill="#188033"/>
<polygon points="312.2,191.2 306.8,194.4 306.8,186.5" fill="#137323"/>
<polygon points="299.2,198.3 306.8,194.4 305.6,200.4" fill="#a01926"/>
<polygon points="307.8,133.3 312.2,130.0 312.2,139.6" fill="#a01926"/>
<polygon points="312.2,130.0 307.8,133.3 307.4,125.6" fill="#6e20a0"/>
<polygon points="305.9,146.0 312.2,153.8 305.1,158.3" fill="#a09919"/>
<polygon points="303.4,177.0 303.6,168.9 312.2,174.0" fill="#2693a6"/>
<polygon points="312.2,179.0 303.4,177.0 312.2,174.0" fill="#188033"/>
<polygon points="303.4,177.0 312.2,179.0 306.8,186.5" fill="#a6a020"/>
<polygon points="303.6,168.9 308.1,163.9 312.2,174.0" fill="#b9b9b9"/>
<polygon points="308.1,163.9 303.6,168.9 305.1,158.3" fill="#137323"/>
<polygon points="308.1,163.9 312.2,153.8 312.2,159.6" fill="#188033"/>
<polygon points="312.2,153.8 308.1,163.9 305.1,158.3" fill="#b33399"/>
<polygon points="251.6,145.0 256.6,136.3 258.9,142.8" fill="#137323"/>
<polygon points="247.8,130.7 255.9,132.4 247.8,140.1" fill="#a01926"/>
<polygon points="255.9,132.4 251.6,145.0 247.8,140.1" fill="#a6208c"/>
<polygon points="251.6,145.0 255.9,132.4 256.6,136.3" fill="#a09919"/>
<polygon points="255.9,132.4 247.8,130.7 255.3,123.5" fill="#1b2ca0"/>
<polygon points="255.9,132.4 255.3,123.5 259.7,124.6" fill="#208c39"/>
<polygon points="262.3,130.7 255.9,132.4 259.7,124.6" fill="#1b2ca0"/>
<polygon points="256.6,136.3 255.9,132.4 262.3,130.7" fill="#a01926"/>
<polygon points="247.8,112.9 252.9,119.4 247.8,122.2" fill="#6e20a0"/>
<polygon points="247.8,103.4 254.8,105.6 247.8,107.4" fill="#188033"/>
<polygon points="254.8,105.6 247.8,103.4 253.8,99.6" fill="#188033"/>
<polygon points="254.8,105.6 247.8,112.9 247.8,107.4" fill="#b9b9b9"/>
<polygon points="247.8,112.9 254.8,105.6 252.9,119.4" fill="#208c39"/>
<polygon points="255.2,97.3 254.8,105.6 253.8,99.6" fill="#a6a020"/>
<polygon points="252.9,119.4 247.8,125.5 247.8,122.2" fill="#86b0b6"/>
<polygon points="247.8,130.7 247.8,125.5 255.3,123.5" fill="#b9b9b9"/>
<polygon points="247.8,125.5 252.9,119.4 255.3,123.5" fill="#a09919"/>
<polygon points="247.8,98.0 247.8,91.9 253.8,99.6" fill="#1b2ca0"/>
<polygon points="288.5,124.1 291.4,122.2 294.6,134.9" fill="#6e20a0"/>
<polygon points="293.8,110.1 287.1,111.2 293.2,105.0" fill="#b33399"/>
<polygon points="286.0,130.5 280.6,143.1 278.5,135.2" fill="#a09919"/>
<polygon points="280.6,143.1 273.1,146.3 278.5,135.2" fill="#1b2ca0"/>
<polygon points="280.6,143.1 278.7,150.5 273.1,146.3" fill="#a01886"/>
<polygon points="286.9,136.3 288.5,124.1 294.6,134.9" fill="#188033"/>
<polygon points="286.9,136.3 286.0,130.5 288.5,124.1" fill="#1b2ca0"/>
<polygon points="286.9,136.3 280.6,143.1 286.0,130.5" fill="#b9b9b9"/>
<polygon points="279.8,105.5 275.7,105.1 281.2,97.9" fill="#b9b9b9"/>
<polygon points="275.7,105.1 279.8,105.5 280.7,109.4" fill="#a6202c"/>
<polygon points="266.7,113.1 266.1,108.9 271.0,113.0" fill="#a01926"/>
<polygon points="287.2,105.3 288.5,100.8 293.2,105.0" fill="#188033"/>
<polygon points="287.1,111.2 287.2,105.3 293.2,105.0" fill="#2693a6"/>
<polygon points="287.2,105.3 287.1,111.2 280.7,109.4" fill="#2693a6"/>
<polygon points="288.5,100.8 287.2,105.3 281.2,97.9" fill="#a6202c"/>
<polygon points="287.2,105.3 279.8,105.5 281.2,97.9" fill="#a6208c"/>
<polygon points="279.8,105.5 287.2,105.3 280.7,109.4" fill="#208c39"/>
<polygon points="275.5,201.3 268.3,200.3 273.4,194.1" fill="#a6208c"/>
<polygon points="275.5,201.3 278.2,194.5 279.5,201.8" fill="#b33399"/>
<polygon points="278.2,194.5 275.5,201.3 273.4,194.1" fill="#137323"/>
<polygon points="268.3,200.3 265.6,191.2 273.4,194.1" fill="#2693a6"/>
<polygon points="265.6,191.2 268.3,200.3 260.6,199.3" fill="#1886a0"/>
<polygon points="287.9,115.2 278.9,117.6 287.1,111.2" fill="#137323"/>
<polygon points="287.9,115.2 291.4,122.2 288.5,124.1" fill="#a01926"/>
<polygon points="287.9,115.2 288.5,124.1 279.1,125.5" fill="#a6a020"/>
<polygon points="278.9,117.6 287.9,115.2 279.1,125.5" fill="#a6202c"/>
<polygon points="291.4,122.2 287.9,115.2 293.3,118.9" fill="#6e20a0"/>
<polygon points="287.9,115.2 293.8,110.1 293.3,118.9" fill="#b9b9b9"/>
<polygon points="293.8,110.1 287.9,115.2 287.1,111.2" fill="#a01886"/>
<polygon points="272.9,119.1 278.9,117.6 275.5,123.1" fill="#a01926"/>
<polygon points="275.7,105.1 272.9,119.1 271.0,113.0" fill="#b33399"/>
<polygon points="278.9,117.6 272.9,119.1 275.7,105.1" fill="#188033"/>
<polygon points="268.0,137.7 268.9,124.8 272.4,136.8" fill="#208c39"/>
<polygon points="265.1,130.4 268.9,124.8 268.0,137.7" fill="#2693a6"/>
<polygon points="268.9,124.8 275.1,130.0 272.4,136.8" fill="#188033"/>
<polygon points="275.1,130.0 268.9,124.8 275.5,123.1" fill="#188033"/>
<polygon points="268.9,124.8 272.9,119.1 275.5,123.1" fill="#188033"/>
<polygon points="272.9,119.1 268.9,124.8 271.0,113.0" fill="#1b2ca0"/>
<polygon points="247.8,169.2 247.8,161.1 253.0,167.8" fill="#2139ac"/>
<polygon points="247.8,161.1 252.0,155.9 253.0,167.8" fill="#86b0b6"/>
<polygon points="247.8,161.1 247.8,157.5 252.0,155.9" fill="#a6202c"/>
<polygon points="255.9,162.7 259.7,155.2 260.3,161.7" fill="#208c39"/>
<polygon points="252.0,155.9 255.9,162.7 253.0,167.8" fill="#208c39"/>
<polygon points="255.9,162.7 258.6,170.0 253.0,167.8" fill="#a6202c"/>
<polygon points="258.6,170.0 255.9,162.7 260.3,161.7" fill="#2139ac"/>
<polygon points="267.8,152.1 266.3,157.2 262.4,147.5" fill="#b9b9b9"/>
<polygon points="266.3,157.2 259.7,155.2 262.4,147.5" fill="#137323"/>
<polygon points="260.3,161.7 266.3,157.2 267.1,163.7" fill="#1b2ca0"/>
<polygon points="259.7,155.2 266.3,157.2 260.3,161.7" fill="#1b2ca0"/>
<polygon points="251.7,175.7 247.8,172.1 247.8,169.2" fill="#2139ac"/>
<polygon points="247.8,172.1 251.7,175.7 247.8,181.3" fill="#2693a6"/>
<polygon points="258.6,170.0 258.6,176.3 253.0,167.8" fill="#a01926"/>
<polygon points="251.7,175.7 252.8,178.5 247.8,181.3" fill="#a09919"/>
<polygon points="252.8,178.5 251.7,175.7 253.0,167.8" fill="#a01886"/>
<polygon points="258.6,176.3 252.8,178.5 253.0,167.8" fill="#6e20a0"/>
<polygon points="307.7,75.7 304.5,69.6 312.2,68.4" fill="#86b0b6"/>
<polygon points="304.5,69.6 305.0,83.5 301.1,70.0" fill="#a6202c"/>
<polygon points="304.5,69.6 307.7,75.7 305.0,83.5" fill="#a6a020"/>
<polygon points="312.2,76.6 307.7,75.7 312.2,68.4" fill="#b9b9b9"/>
<polygon points="299.4,83.1 293.6,83.3 294.3,78.2" fill="#a09919"/>
<polygon points="298.3,94.9 292.9,100.5 294.7,91.3" fill="#b33399"/>
<polygon points="292.9,100.5 298.3,94.9 293.2,105.0" fill="#137323"/>
<polygon points="305.4,104.6 307.7,92.4 312.2,101.3" fill="#a09919"/>
<polygon points="312.2,110.8 305.4,104.6 312.2,101.3" fill="#b33399"/>
<polygon points="295.4,204.0 299.2,198.3 299.1,204.5" fill="#a01886"/>
<polygon points="275.8,188.7 273.4,194.1 272.8,181.4" fill="#2139ac"/>
<polygon points="275.8,188.7 278.2,194.5 273.4,194.1" fill="#a01886"/>
<polygon points="276.0,176.3 275.8,188.7 272.8,181.4" fill="#188033"/>
<polygon points="275.8,188.7 276.0,176.3 279.2,182.1" fill="#1886a0"/>
<polygon points="279.7,190.2 275.8,188.7 279.2,182.1" fill="#b33399"/>
<polygon points="275.8,188.7 279.7,190.2 278.2,194.5" fill="#1b2ca0"/>
<polygon points="285.5,197.6 287.7,202.9 279.5,201.8" fill="#137323"/>
<polygon points="285.5,197.6 279.7,190.2 284.7,188.3" fill="#6e20a0"/>
<polygon points="285.5,197.6 284.7,188.3 291.3,190.7" fill="#2139ac"/>
<polygon points="278.2,194.5 285.5,197.6 279.5,201.8" fill="#2139ac"/>
<polygon points="279.7,190.2 285.5,197.6 278.2,194.5" fill="#137323"/>
<polygon points="281.6,173.8 284.2,183.0 279.2,182.1" fill="#2139ac"/>
<polygon points="284.2,183.0 279.7,190.2 279.2,182.1" fill="#a6208c"/>
<polygon points="279.7,190.2 284.2,183.0 284.7,188.3" fill="#137323"/>
<polygon points="284.7,188.3 284.2,183.0 287.9,176.8" fill="#6e20a0"/>
<polygon points="303.7,148.5 305.9,146.0 305.1,158.3" fill="#188033"/>
<polygon points="297.0,155.6 303.7,148.5 305.1,158.3" fill="#a09919"/>
<polygon points="303.7,148.5 297.0,155.6 296.9,148.7" fill="#208c39"/>
<polygon points="297.0,155.6 294.4,147.9 296.9,148.7" fill="#208c39"/>
<polygon points="274.0,155.9 271.1,149.0 273.1,146.3" fill="#6e20a0"/>
<polygon points="278.7,150.5 274.0,155.9 273.1,146.3" fill="#a01886"/>
<polygon points="274.0,155.9 267.8,152.1 271.1,149.0" fill="#a6208c"/>
<polygon points="274.0,155.9 266.3,157.2 267.8,152.1" fill="#a01886"/>
<polygon points="284.4,157.3 278.7,150.5 286.0,150.4" fill="#a01926"/>
<polygon points="308.1,139.6 307.8,133.3 312.2,139.6" fill="#1886a0"/>
<polygon points="300.7,182.6 303.4,177.0 306.8,186.5" fill="#137323"/>
<polygon points="306.8,194.4 300.7,182.6 306.8,186.5" fill="#a01886"/>
<polygon points="308.1,163.9 312.2,167.2 312.2,174.0" fill="#b33399"/>
<polygon points="312.2,167.2 308.1,163.9 312.2,159.6" fill="#b9b9b9"/>
<polygon points="256.5,151.5 251.6,145.0 258.9,142.8" fill="#a01886"/>
<polygon points="262.4,147.5 256.5,151.5 258.9,142.8" fill="#a6a020"/>
<polygon points="259.7,155.2 256.5,151.5 262.4,147.5" fill="#a6a020"/>
<polygon points="251.6,145.0 256.5,151.5 252.0,155.9" fill="#a6a020"/>
<polygon points="256.5,151.5 255.9,162.7 252.0,155.9" fill="#a01926"/>
<polygon points="255.9,162.7 256.5,151.5 259.7,155.2" fill="#208c39"/>
<polygon points="247.8,157.5 247.8,151.2 252.0,155.9" fill="#a01886"/>
<polygon points="247.8,151.2 251.6,145.0 252.0,155.9" fill="#a6208c"/>
<polygon points="254.8,105.6 256.8,113.4 252.9,119.4" fill="#a01886"/>
<polygon points="252.9,119.4 256.8,113.4 255.3,123.5" fill="#a6a020"/>
<polygon points="255.3,123.5 256.8,113.4 259.7,124.6" fill="#2139ac"/>
<polygon points="256.8,113.4 261.2,118.3 259.7,124.6" fill="#a01886"/>
<polygon points="252.8,77.3 247.8,82.6 247.8,78.0" fill="#2139ac"/>
<polygon points="255.4,91.2 252.8,77.3 256.9,82.6" fill="#86b0b6"/>
<polygon points="247.8,82.6 255.4,91.2 247.8,91.9" fill="#1886a0"/>
<polygon points="255.4,91.2 247.8,82.6 252.8,77.3" fill="#b33399"/>
<polygon points="260.1,90.0 255.4,91.2 256.9,82.6" fill="#a6a020"/>
<polygon points="255.4,91.2 260.1,90.0 255.2,97.3" fill="#188033"/>
<polygon points="255.4,91.2 255.2,97.3 253.8,99.6" fill="#a6208c"/>
<polygon points="247.8,91.9 255.4,91.2 253.8,99.6" fill="#86b0b6"/>
<polygon points="291.4,122.2 295.2,128.9 294.6,134.9" fill="#a01886"/>
<polygon points="295.2,128.9 291.4,122.2 293.3,118.9" fill="#2139ac"/>
<polygon points="299.5,122.2 295.2,128.9 293.3,118.9" fill="#1b2ca0"/>
<polygon points="278.7,150.5 285.1,146.0 286.0,150.4" fill="#a6202c"/>
<polygon points="280.6,143.1 285.1,146.0 278.7,150.5" fill="#b33399"/>
<polygon points="286.9,136.3 285.1,146.0 280.6,143.1" fill="#b33399"/>
<polygon points="267.9,79.4 266.4,75.2 274.1,74.1" fill="#a01886"/>
<polygon points="262.5,81.9 256.9,82.6 260.9,76.0" fill="#b9b9b9"/>
<polygon points="262.5,81.9 260.1,90.0 256.9,82.6" fill="#86b0b6"/>
<polygon points="266.4,75.2 262.5,81.9 260.9,76.0" fill="#2139ac"/>
<polygon points="262.5,81.9 266.4,75.2 267.9,79.4" fill="#b33399"/>
<polygon points="275.7,105.1 275.5,95.5 281.2,97.9" fill="#a09919"/>
<polygon points="274.3,82.4 267.9,79.4 274.1,74.1" fill="#a01886"/>
<polygon points="267.9,79.4 274.3,82.4 268.0,92.0" fill="#6e20a0"/>
<polygon points="259.6,102.2 254.8,105.6 255.2,97.3" fill="#6e20a0"/>
<polygon points="260.1,90.0 259.6,102.2 255.2,97.3" fill="#a6202c"/>
<polygon points="262.6,96.9 259.6,102.2 260.1,90.0" fill="#6e20a0"/>
<polygon points="259.6,102.2 262.6,96.9 266.1,108.9" fill="#1b2ca0"/>
<polygon points="273.4,194.1 268.5,181.0 272.8,181.4" fill="#6e20a0"/>
<polygon points="265.6,191.2 268.5,181.0 273.4,194.1" fill="#a6208c"/>
<polygon points="261.1,192.0 265.6,191.2 260.6,199.3" fill="#2693a6"/>
<polygon points="266.7,113.1 266.4,117.9 261.2,118.3" fill="#a01926"/>
<polygon points="266.4,117.9 265.1,130.4 261.2,118.3" fill="#a01926"/>
<polygon points="266.4,117.9 268.9,124.8 265.1,130.4" fill="#6e20a0"/>
<polygon points="266.4,117.9 266.7,113.1 271.0,113.0" fill="#137323"/>
<polygon points="268.9,124.8 266.4,117.9 271.0,113.0" fill="#a01926"/>
<polygon points="247.8,192.7 247.8,185.7 254.2,187.0" fill="#a6202c"/>
<polygon points="252.8,178.5 247.8,185.7 247.8,181.3" fill="#1886a0"/>
<polygon points="247.8,185.7 252.8,178.5 254.2,187.0" fill="#a01886"/>
<polygon points="253.8,194.1 254.5,198.5 247.8,197.6" fill="#2139ac"/>
<polygon points="247.8,192.7 253.8,194.1 247.8,197.6" fill="#2693a6"/>
<polygon points="253.8,194.1 247.8,192.7 254.2,187.0" fill="#a01926"/>
<polygon points="261.1,192.0 253.8,194.1 254.2,187.0" fill="#208c39"/>
<polygon points="254.5,198.5 253.8,194.1 260.6,199.3" fill="#6e20a0"/>
<polygon points="253.8,194.1 261.1,192.0 260.6,199.3" fill="#b9b9b9"/>
<polygon points="287.4,76.2 284.1,72.6 290.2,71.7" fill="#2139ac"/>
<polygon points="282.2,92.6 288.5,100.8 281.2,97.9" fill="#1b2ca0"/>
<polygon points="282.2,92.6 287.6,90.1 288.5,100.8" fill="#2139ac"/>
<polygon points="275.5,95.5 282.2,92.6 281.2,97.9" fill="#a01886"/>
<polygon points="282.2,92.6 275.5,95.5 278.0,84.8" fill="#1b2ca0"/>
<polygon points="312.2,76.6 312.2,82.7 307.7,75.7" fill="#a6202c"/>
<polygon points="307.7,75.7 312.2,82.7 305.0,83.5" fill="#137323"/>
<polygon points="312.2,82.7 307.7,92.4 305.0,83.5" fill="#1b2ca0"/>
<polygon points="307.7,92.4 312.2,82.7 312.2,86.7" fill="#a01886"/>
<polygon points="293.6,83.3 298.2,88.1 294.7,91.3" fill="#208c39"/>
<polygon points="298.2,88.1 293.6,83.3 299.4,83.1" fill="#188033"/>
<polygon points="298.2,88.1 298.3,94.9 294.7,91.3" fill="#1b2ca0"/>
<polygon points="298.2,88.1 299.4,83.1 305.0,83.5" fill="#6e20a0"/>
<polygon points="298.3,94.9 298.2,88.1 305.0,83.5" fill="#b33399"/>
<polygon points="287.4,76.2 289.0,84.6 287.6,90.1" fill="#1b2ca0"/>
<polygon points="287.6,90.1 289.0,84.6 294.7,91.3" fill="#a6208c"/>
<polygon points="289.0,84.6 293.6,83.3 294.7,91.3" fill="#a01886"/>
<polygon points="293.6,83.3 289.0,84.6 294.3,78.2" fill="#a6202c"/>
<polygon points="294.3,78.2 289.0,84.6 290.2,71.7" fill="#6e20a0"/>
<polygon points="289.0,84.6 287.4,76.2 290.2,71.7" fill="#a6a020"/>
<polygon points="307.7,92.4 312.2,94.2 312.2,101.3" fill="#86b0b6"/>
<polygon points="312.2,94.2 307.7,92.4 312.2,86.7" fill="#a6208c"/>
<polygon points="306.3,93.8 307.7,92.4 305.4,104.6" fill="#a6208c"/>
<polygon points="306.3,93.8 298.3,94.9 305.0,83.5" fill="#1886a0"/>
<polygon points="307.7,92.4 306.3,93.8 305.0,83.5" fill="#a6202c"/>
<polygon points="307.4,115.4 312.2,121.7 307.4,125.6" fill="#a6208c"/>
<polygon points="312.2,110.8 307.4,115.4 305.4,104.6" fill="#a6202c"/>
<polygon points="305.4,104.6 307.4,115.4 303.2,107.8" fill="#b33399"/>
<polygon points="307.4,115.4 300.4,111.8 303.2,107.8" fill="#a01886"/>
<polygon points="299.5,122.2 307.4,115.4 307.4,125.6" fill="#1886a0"/>
<polygon points="300.4,111.8 307.4,115.4 299.5,122.2" fill="#1886a0"/>
<polygon points="291.0,199.5 295.4,204.0 287.7,202.9" fill="#188033"/>
<polygon points="295.4,204.0 291.0,199.5 291.3,190.7" fill="#a6202c"/>
<polygon points="291.0,199.5 285.5,197.6 291.3,190.7" fill="#b33399"/>
<polygon points="285.5,197.6 291.0,199.5 287.7,202.9" fill="#2139ac"/>
<polygon points="303.7,148.5 301.5,138.5 305.9,146.0" fill="#1b2ca0"/>
<polygon points="301.5,138.5 308.1,139.6 305.9,146.0" fill="#a6a020"/>
<polygon points="308.1,139.6 301.5,138.5 307.8,133.3" fill="#188033"/>
<polygon points="307.8,133.3 301.5,138.5 307.4,125.6" fill="#a01926"/>
<polygon points="301.5,138.5 299.5,122.2 307.4,125.6" fill="#188033"/>
<polygon points="278.3,155.9 274.0,155.9 278.7,150.5" fill="#a6208c"/>
<polygon points="284.4,157.3 278.3,155.9 278.7,150.5" fill="#a09919"/>
<polygon points="266.3,157.2 273.1,164.0 267.1,163.7" fill="#2693a6"/>
<polygon points="274.0,155.9 273.1,164.0 266.3,157.2" fill="#6e20a0"/>
<polygon points="278.3,155.9 273.1,164.0 274.0,155.9" fill="#a09919"/>
<polygon points="284.2,183.0 284.3,170.5 287.9,176.8" fill="#b33399"/>
<polygon points="284.3,170.5 284.2,183.0 281.6,173.8" fill="#1886a0"/>
<polygon points="284.3,170.5 286.6,164.7 287.9,176.8" fill="#b9b9b9"/>
<polygon points="286.6,164.7 284.3,170.5 284.4,157.3" fill="#2693a6"/>
<polygon points="312.2,142.3 308.1,139.6 312.2,139.6" fill="#a01886"/>
<polygon points="312.2,142.3 312.2,153.8 305.9,146.0" fill="#a6a020"/>
<polygon points="308.1,139.6 312.2,142.3 305.9,146.0" fill="#a01926"/>
<polygon points="298.3,189.5 306.8,194.4 299.2,198.3" fill="#a6a020"/>
<polygon points="298.3,189.5 300.7,182.6 306.8,194.4" fill="#a01886"/>
<polygon points="298.3,189.5 295.4,204.0 291.3,190.7" fill="#a6208c"/>
<polygon points="295.4,204.0 298.3,189.5 299.2,198.3" fill="#86b0b6"/>
<polygon points="300.7,182.6 300.7,180.2 303.4,177.0" fill="#a01886"/>
<polygon points="251.6,145.0 247.8,144.2 247.8,140.1" fill="#a01886"/>
<polygon points="247.8,151.2 247.8,144.2 251.6,145.0" fill="#188033"/>
<polygon points="298.3,115.8 299.5,122.2 293.3,118.9" fill="#a01886"/>
<polygon points="298.3,115.8 300.4,111.8 299.5,122.2" fill="#a01886"/>
<polygon points="293.8,110.1 298.3,115.8 293.3,118.9" fill="#a01886"/>
<polygon points="300.4,111.8 298.3,115.8 293.8,110.1" fill="#1b2ca0"/>
<polygon points="292.8,145.6 285.1,146.0 286.9,136.3" fill="#137323"/>
<polygon points="292.8,145.6 286.9,136.3 294.6,134.9" fill="#a6208c"/>
<polygon points="285.1,146.0 292.8,145.6 286.0,150.4" fill="#b33399"/>
<polygon points="266.8,89.9 267.9,79.4 268.0,92.0" fill="#a6208c"/>
<polygon points="266.8,89.9 262.5,81.9 267.9,79.4" fill="#2139ac"/>
<polygon points="262.5,81.9 266.8,89.9 260.1,90.0" fill="#137323"/>
<polygon points="262.6,96.9 266.8,89.9 268.0,92.0" fill="#a6a020"/>
<polygon points="266.8,89.9 262.6,96.9 260.1,90.0" fill="#2139ac"/>
<polygon points="269.1,97.5 262.6,96.9 268.0,92.0" fill="#b33399"/>
<polygon points="262.6,96.9 269.1,97.5 266.1,108.9" fill="#a6a020"/>
<polygon points="269.1,97.5 275.7,105.1 271.0,113.0" fill="#b33399"/>
<polygon points="266.1,108.9 269.1,97.5 271.0,113.0" fill="#a01926"/>
<polygon points="275.5,95.5 275.6,84.4 278.0,84.8" fill="#a6208c"/>
<polygon points="258.2,109.0 256.8,113.4 254.8,105.6" fill="#a6202c"/>
<polygon points="259.6,102.2 258.2,109.0 254.8,105.6" fill="#a09919"/>
<polygon points="268.5,181.0 268.1,177.0 272.8,181.4" fill="#a6202c"/>
<polygon points="264.9,188.7 268.5,181.0 265.6,191.2" fill="#a01886"/>
<polygon points="261.1,192.0 264.9,188.7 265.6,191.2" fill="#a09919"/>
<polygon points="259.3,181.3 261.1,192.0 254.2,187.0" fill="#1b2ca0"/>
<polygon points="252.8,178.5 259.3,181.3 254.2,187.0" fill="#86b0b6"/>
<polygon points="259.3,181.3 252.8,178.5 258.6,176.3" fill="#188033"/>
<polygon points="284.1,72.6 280.1,80.9 280.7,73.1" fill="#137323"/>
<polygon points="280.1,80.9 274.1,74.1 280.7,73.1" fill="#a6202c"/>
<polygon points="280.1,80.9 282.2,92.6 278.0,84.8" fill="#b9b9b9"/>
<polygon points="280.1,80.9 274.3,82.4 274.1,74.1" fill="#a6a020"/>
<polygon points="280.1,80.9 284.1,72.6 287.4,76.2" fill="#b9b9b9"/>
<polygon points="275.6,84.4 280.1,80.9 278.0,84.8" fill="#a6202c"/>
<polygon points="280.1,80.9 275.6,84.4 274.3,82.4" fill="#1b2ca0"/>
<polygon points="280.1,80.9 287.4,76.2 287.6,90.1" fill="#a6202c"/>
<polygon points="282.2,92.6 280.1,80.9 287.6,90.1" fill="#b9b9b9"/>
<polygon points="301.7,103.7 306.3,93.8 305.4,104.6" fill="#a01926"/>
<polygon points="306.3,93.8 301.7,103.7 298.3,94.9" fill="#1b2ca0"/>
<polygon points="301.7,103.7 305.4,104.6 303.2,107.8" fill="#a01926"/>
<polygon points="300.4,111.8 301.7,103.7 303.2,107.8" fill="#86b0b6"/>
<polygon points="298.3,94.9 301.7,103.7 293.2,105.0" fill="#6e20a0"/>
<polygon points="301.7,103.7 293.8,110.1 293.2,105.0" fill="#1886a0"/>
<polygon points="301.7,103.7 300.4,111.8 293.8,110.1" fill="#6e20a0"/>
<polygon points="307.4,115.4 312.2,114.8 312.2,121.7" fill="#b33399"/>
<polygon points="312.2,114.8 307.4,115.4 312.2,110.8" fill="#a01926"/>
<polygon points="295.2,128.9 296.6,133.2 294.6,134.9" fill="#2693a6"/>
<polygon points="296.6,133.2 295.2,128.9 299.5,122.2" fill="#1b2ca0"/>
<polygon points="301.5,138.5 296.6,133.2 299.5,122.2" fill="#137323"/>
<polygon points="298.5,142.4 303.7,148.5 296.9,148.7" fill="#a6202c"/>
<polygon points="298.5,142.4 301.5,138.5 303.7,148.5" fill="#b33399"/>
<polygon points="298.5,142.4 296.6,133.2 301.5,138.5" fill="#a6208c"/>
<polygon points="296.6,133.2 298.5,142.4 294.6,134.9" fill="#208c39"/>
<polygon points="294.4,147.9 298.5,142.4 296.9,148.7" fill="#1b2ca0"/>
<polygon points="298.5,142.4 292.8,145.6 294.6,134.9" fill="#a01886"/>
<polygon points="292.8,145.6 298.5,142.4 294.4,147.9" fill="#6e20a0"/>
<polygon points="281.3,170.2 284.3,170.5 281.6,173.8" fill="#a01886"/>
<polygon points="281.3,170.2 276.0,176.3 275.1,170.3" fill="#188033"/>
<polygon points="281.3,170.2 281.6,173.8 276.0,176.3" fill="#a6a020"/>
<polygon points="295.4,183.5 291.3,190.7 287.9,176.8" fill="#1886a0"/>
<polygon points="295.4,183.5 298.3,189.5 291.3,190.7" fill="#a6208c"/>
<polygon points="298.3,189.5 295.4,183.5 300.7,182.6" fill="#a6208c"/>
<polygon points="295.4,183.5 300.7,180.2 300.7,182.6" fill="#6e20a0"/>
<polygon points="298.9,166.3 297.0,155.6 305.1,158.3" fill="#6e20a0"/>
<polygon points="274.2,97.1 275.5,95.5 275.7,105.1" fill="#a6a020"/>
<polygon points="269.1,97.5 274.2,97.1 275.7,105.1" fill="#a01926"/>
<polygon points="274.2,97.1 269.1,97.5 268.0,92.0" fill="#a01886"/>
<polygon points="274.2,97.1 275.6,84.4 275.5,95.5" fill="#a01886"/>
<polygon points="274.3,82.4 274.2,97.1 268.0,92.0" fill="#2139ac"/>
<polygon points="275.6,84.4 274.2,97.1 274.3,82.4" fill="#a6202c"/>
<polygon points="256.8,113.4 260.9,110.5 261.2,118.3" fill="#188033"/>
<polygon points="258.2,109.0 260.9,110.5 256.8,113.4" fill="#a6a020"/>
<polygon points="260.9,110.5 266.7,113.1 261.2,118.3" fill="#a09919"/>
<polygon points="266.7,113.1 260.9,110.5 266.1,108.9" fill="#188033"/>
<polygon points="260.9,110.5 259.6,102.2 266.1,108.9" fill="#6e20a0"/>
<polygon points="260.9,110.5 258.2,109.0 259.6,102.2" fill="#a01886"/>
<polygon points="268.0,171.0 275.1,170.3 272.8,181.4" fill="#2139ac"/>
<polygon points="268.1,177.0 268.0,171.0 272.8,181.4" fill="#1886a0"/>
<polygon points="268.0,171.0 273.1,164.0 275.1,170.3" fill="#a6208c"/>
<polygon points="273.1,164.0 268.0,171.0 267.1,163.7" fill="#208c39"/>
<polygon points="268.0,171.0 258.6,170.0 267.1,163.7" fill="#208c39"/>
<polygon points="268.0,171.0 258.6,176.3 258.6,170.0" fill="#a01886"/>
<polygon points="268.0,171.0 268.1,177.0 258.6,176.3" fill="#188033"/>
<polygon points="262.8,185.4 264.9,188.7 261.1,192.0" fill="#1886a0"/>
<polygon points="259.3,181.3 262.8,185.4 261.1,192.0" fill="#a09919"/>
<polygon points="262.8,185.4 268.1,177.0 268.5,181.0" fill="#2139ac"/>
<polygon points="264.9,188.7 262.8,185.4 268.5,181.0" fill="#1886a0"/>
<polygon points="268.1,177.0 262.8,185.4 258.6,176.3" fill="#b9b9b9"/>
<polygon points="262.8,185.4 259.3,181.3 258.6,176.3" fill="#137323"/>
<polygon points="284.3,170.5 279.8,161.9 284.4,157.3" fill="#86b0b6"/>
<polygon points="281.3,170.2 279.8,161.9 284.3,170.5" fill="#137323"/>
<polygon points="279.8,161.9 278.3,155.9 284.4,157.3" fill="#a6a020"/>
<polygon points="279.8,161.9 281.3,170.2 275.1,170.3" fill="#b9b9b9"/>
<polygon points="273.1,164.0 279.8,161.9 275.1,170.3" fill="#2139ac"/>
<polygon points="279.8,161.9 273.1,164.0 278.3,155.9" fill="#6e20a0"/>
<polygon points="303.6,168.9 300.8,168.5 305.1,158.3" fill="#1b2ca0"/>
<polygon points="300.8,168.5 298.9,166.3 305.1,158.3" fill="#a01886"/>
<polygon points="303.4,177.0 300.8,168.5 303.6,168.9" fill="#a6208c"/>
<polygon points="300.7,180.2 300.8,168.5 303.4,177.0" fill="#188033"/>
<polygon points="298.9,166.3 300.8,168.5 300.7,180.2" fill="#a01886"/>
<polygon points="295.4,183.5 294.0,175.1 300.7,180.2" fill="#188033"/>
<polygon points="294.0,175.1 298.9,166.3 300.7,180.2" fill="#2139ac"/>
<polygon points="294.0,175.1 295.4,183.5 287.9,176.8" fill="#2693a6"/>
<polygon points="286.6,164.7 290.2,168.4 287.9,176.8" fill="#a01886"/>
<polygon points="290.2,168.4 294.0,175.1 287.9,176.8" fill="#188033"/>
<polygon points="297.0,155.6 294.0,156.7 294.4,147.9" fill="#6e20a0"/>
<polygon points="298.9,166.3 294.0,156.7 297.0,155.6" fill="#a6202c"/>
<polygon points="292.8,145.6 294.0,156.7 286.0,150.4" fill="#1886a0"/>
<polygon points="294.0,156.7 292.8,145.6 294.4,147.9" fill="#188033"/>
<polygon points="290.6,163.4 294.0,156.7 298.9,166.3" fill="#b33399"/>
<polygon points="294.0,175.1 290.6,163.4 298.9,166.3" fill="#a01926"/>
<polygon points="290.2,168.4 290.6,163.4 294.0,175.1" fill="#a6202c"/>
<polygon points="290.6,163.4 290.2,168.4 286.6,164.7" fill="#6e20a0"/>
<polygon points="294.0,156.7 290.6,163.4 286.0,150.4" fill="#188033"/>
<polygon points="290.6,163.4 284.4,157.3 286.0,150.4" fill="#a09919"/>
<polygon points="290.6,163.4 286.6,164.7 284.4,157.3" fill="#6e20a0"/>
</g>
<path d="M289.7,71.8 L289.7,203.2 M247.8,137.8 L312.2,137.3" stroke="#4a4a4a" stroke-width="1.1" fill="none"/>
</g>
<g filter="url(#b2)">
<polygon points="42.0,289.5 52.0,289.2 47.8,293.6" fill="#6d0e59"/>
<polygon points="47.8,293.6 52.0,289.2 53.9,291.3" fill="#7c7713"/>
<polygon points="215.9,254.6 211.1,255.6 210.9,253.6" fill="#7c131d"/>
<polygon points="67.8,303.9 73.9,305.2 66.7,306.8" fill="#55187c"/>
<polygon points="60.4,302.4 67.8,303.9 66.7,306.8" fill="#000000"/>
<polygon points="73.9,305.2 67.8,303.9 80.7,303.7" fill="#000000"/>
<polygon points="256.4,262.7 246.5,263.0 248.7,260.6" fill="#7c1368"/>
<polygon points="141.5,275.1 126.8,276.5 134.4,273.1" fill="#13687c"/>
<polygon points="45.8,286.0 39.2,287.6 35.8,285.2" fill="#7c131d"/>
<polygon points="39.2,287.6 45.8,286.0 42.0,289.5" fill="#13687c"/>
<polygon points="55.7,285.2 52.0,289.2 42.0,289.5" fill="#15227c"/>
<polygon points="45.8,286.0 55.7,285.2 42.0,289.5" fill="#55187c"/>
<polygon points="35.6,279.9 30.5,281.5 24.5,277.3" fill="#13687c"/>
<polygon points="46.8,283.9 45.8,286.0 35.8,285.2" fill="#000000"/>
<polygon points="46.8,283.9 55.6,279.9 66.5,282.1" fill="#15227c"/>
<polygon points="55.7,285.2 46.8,283.9 66.5,282.1" fill="#1a2c85"/>
<polygon points="46.8,283.9 55.7,285.2 45.8,286.0" fill="#55187c"/>
<polygon points="30.5,281.5 37.4,282.3 35.8,285.2" fill="#15227c"/>
<polygon points="37.4,282.3 46.8,283.9 35.8,285.2" fill="#7c131d"/>
<polygon points="35.6,279.9 37.4,282.3 30.5,281.5" fill="#000000"/>
<polygon points="123.2,259.1 134.4,259.4 129.7,260.8" fill="#15227c"/>
<polygon points="130.7,262.2 134.4,259.4 144.1,257.9" fill="#55187c"/>
<polygon points="134.4,259.4 130.7,262.2 129.7,260.8" fill="#597c85"/>
<polygon points="142.0,255.7 147.0,254.8 144.1,257.9" fill="#15227c"/>
<polygon points="138.5,256.3 142.0,255.7 144.1,257.9" fill="#000000"/>
<polygon points="134.4,259.4 138.5,256.3 144.1,257.9" fill="#090909"/>
<polygon points="138.5,256.3 134.4,259.4 133.0,257.3" fill="#090909"/>
<polygon points="221.0,253.1 215.9,254.6 210.9,253.6" fill="#15227c"/>
<polygon points="214.9,251.4 221.0,253.1 210.9,253.6" fill="#7c1368"/>
<polygon points="221.0,253.1 234.1,256.6 228.2,257.1" fill="#7c1368"/>
<polygon points="215.9,254.6 221.0,253.1 228.2,257.1" fill="#0e591b"/>
<polygon points="211.1,255.6 202.0,256.1 210.9,253.6" fill="#136327"/>
<polygon points="200.7,253.7 214.9,251.4 210.9,253.6" fill="#000000"/>
<polygon points="202.0,256.1 200.7,253.7 210.9,253.6" fill="#7c1368"/>
<polygon points="188.5,250.2 199.6,247.3 198.9,249.0" fill="#000000"/>
<polygon points="158.6,252.6 165.2,254.7 155.1,253.3" fill="#6d0e59"/>
<polygon points="121.5,285.9 116.6,288.6 108.3,288.4" fill="#13687c"/>
<polygon points="76.7,285.1 79.2,288.3 74.1,289.2" fill="#0e591b"/>
<polygon points="84.9,284.7 100.8,280.0 94.7,283.9" fill="#000000"/>
<polygon points="84.9,284.7 79.2,288.3 76.7,285.1" fill="#13687c"/>
<polygon points="67.4,289.8 76.7,285.1 74.1,289.2" fill="#7c1368"/>
<polygon points="67.4,289.8 74.1,289.2 59.5,294.1" fill="#597c85"/>
<polygon points="78.3,291.7 81.2,293.9 71.1,293.9" fill="#1a2c85"/>
<polygon points="74.1,289.2 78.3,291.7 59.5,294.1" fill="#090909"/>
<polygon points="78.3,291.7 79.2,288.3 88.3,289.1" fill="#13687c"/>
<polygon points="79.2,288.3 78.3,291.7 74.1,289.2" fill="#7c1368"/>
<polygon points="81.2,293.9 75.2,296.1 71.1,293.9" fill="#000000"/>
<polygon points="105.5,283.2 94.0,285.0 94.7,283.9" fill="#090909"/>
<polygon points="79.2,288.3 94.0,285.0 88.3,289.1" fill="#1a2c85"/>
<polygon points="94.0,285.0 84.9,284.7 94.7,283.9" fill="#80186d"/>
<polygon points="84.9,284.7 94.0,285.0 79.2,288.3" fill="#0e591b"/>
<polygon points="100.8,280.0 108.8,281.4 94.7,283.9" fill="#597c85"/>
<polygon points="108.8,281.4 105.5,283.2 94.7,283.9" fill="#136327"/>
<polygon points="61.1,298.4 63.7,294.7 71.1,293.9" fill="#13687c"/>
<polygon points="63.7,294.7 78.3,291.7 71.1,293.9" fill="#090909"/>
<polygon points="78.3,291.7 63.7,294.7 59.5,294.1" fill="#7c131d"/>
<polygon points="254.1,265.3 256.4,262.7 260.7,263.8" fill="#15227c"/>
<polygon points="229.0,268.5 222.9,268.8 234.2,265.5" fill="#0e591b"/>
<polygon points="229.0,268.5 222.4,272.3 222.9,268.8" fill="#136327"/>
<polygon points="231.8,260.0 236.4,257.2 248.7,260.6" fill="#7c1368"/>
<polygon points="220.6,258.8 236.4,257.2 220.0,261.3" fill="#55187c"/>
<polygon points="234.1,256.6 236.4,257.2 228.2,257.1" fill="#80186d"/>
<polygon points="236.4,257.2 220.6,258.8 228.2,257.1" fill="#597c85"/>
<polygon points="230.0,262.4 231.8,260.0 248.7,260.6" fill="#0e591b"/>
<polygon points="207.7,271.7 222.4,272.3 213.1,274.3" fill="#090909"/>
<polygon points="222.4,272.3 207.7,271.7 222.9,268.8" fill="#597c85"/>
<polygon points="65.3,283.4 55.7,285.2 66.5,282.1" fill="#7c131d"/>
<polygon points="55.7,285.2 65.3,283.4 65.5,285.7" fill="#6d0e59"/>
<polygon points="43.5,273.8 47.0,273.2 45.3,276.8" fill="#7c7713"/>
<polygon points="36.1,275.2 43.5,273.8 45.3,276.8" fill="#136327"/>
<polygon points="29.9,276.3 35.6,279.9 24.5,277.3" fill="#000000"/>
<polygon points="35.6,279.9 29.9,276.3 45.3,276.8" fill="#090909"/>
<polygon points="29.9,276.3 36.1,275.2 45.3,276.8" fill="#80186d"/>
<polygon points="47.0,273.2 61.7,273.5 45.3,276.8" fill="#7c1368"/>
<polygon points="46.8,283.9 46.2,280.9 55.6,279.9" fill="#000000"/>
<polygon points="37.4,282.3 46.2,280.9 46.8,283.9" fill="#13687c"/>
<polygon points="134.4,259.4 128.8,258.1 133.0,257.3" fill="#7c131d"/>
<polygon points="128.8,258.1 134.4,259.4 123.2,259.1" fill="#80186d"/>
<polygon points="88.8,268.4 91.6,265.0 100.2,267.1" fill="#136327"/>
<polygon points="113.1,261.0 115.8,263.5 110.5,261.5" fill="#7c7713"/>
<polygon points="113.1,261.0 123.2,259.1 129.7,260.8" fill="#7c1368"/>
<polygon points="115.8,263.5 105.4,262.4 110.5,261.5" fill="#1a2c85"/>
<polygon points="108.4,266.0 95.5,270.9 100.2,267.1" fill="#55187c"/>
<polygon points="164.8,259.6 157.9,263.2 150.5,262.0" fill="#6d0e59"/>
<polygon points="160.7,256.2 165.2,254.7 174.6,255.8" fill="#80186d"/>
<polygon points="167.7,257.3 160.7,256.2 174.6,255.8" fill="#1a2c85"/>
<polygon points="130.7,262.2 133.1,265.3 119.2,266.1" fill="#7c131d"/>
<polygon points="95.5,270.9 107.4,271.1 95.9,272.9" fill="#6d0e59"/>
<polygon points="110.6,270.5 107.4,271.1 95.5,270.9" fill="#000000"/>
<polygon points="141.1,269.2 128.2,273.2 122.7,271.4" fill="#13687c"/>
<polygon points="126.8,276.5 128.2,273.2 134.4,273.1" fill="#7c131d"/>
<polygon points="200.7,253.7 193.9,256.4 185.4,257.3" fill="#000000"/>
<polygon points="193.9,256.4 200.7,253.7 202.0,256.1" fill="#15227c"/>
<polygon points="200.7,253.7 205.2,251.9 214.9,251.4" fill="#000000"/>
<polygon points="189.5,253.4 200.7,253.7 185.4,257.3" fill="#000000"/>
<polygon points="189.5,253.4 205.2,251.9 200.7,253.7" fill="#000000"/>
<polygon points="170.5,253.2 158.6,252.6 164.9,251.5" fill="#13687c"/>
<polygon points="158.6,252.6 170.5,253.2 165.2,254.7" fill="#1a2c85"/>
<polygon points="170.8,250.4 170.5,253.2 164.9,251.5" fill="#0e591b"/>
<polygon points="170.5,253.2 188.5,250.2 183.1,252.4" fill="#090909"/>
<polygon points="170.5,253.2 183.1,252.4 174.6,255.8" fill="#55187c"/>
<polygon points="165.2,254.7 170.5,253.2 174.6,255.8" fill="#7c7713"/>
<polygon points="121.1,282.6 113.6,283.1 125.3,280.1" fill="#6d0e59"/>
<polygon points="155.9,287.0 161.8,282.8 165.9,284.8" fill="#15227c"/>
<polygon points="117.1,295.6 113.9,291.9 124.4,294.0" fill="#090909"/>
<polygon points="56.8,277.1 62.3,278.7 55.6,279.9" fill="#6d0e59"/>
<polygon points="55.6,279.9 62.3,278.7 66.5,282.1" fill="#136327"/>
<polygon points="110.0,273.6 107.4,271.1 110.6,270.5" fill="#7c131d"/>
<polygon points="107.4,271.1 110.0,273.6 95.9,272.9" fill="#80186d"/>
<polygon points="95.0,277.3 81.4,280.3 84.2,278.3" fill="#55187c"/>
<polygon points="84.9,284.7 89.6,281.0 100.8,280.0" fill="#597c85"/>
<polygon points="89.6,281.0 95.0,277.3 100.8,280.0" fill="#15227c"/>
<polygon points="95.0,277.3 85.0,281.4 81.4,280.3" fill="#0e591b"/>
<polygon points="89.6,281.0 85.0,281.4 95.0,277.3" fill="#55187c"/>
<polygon points="58.4,291.0 67.4,289.8 59.5,294.1" fill="#000000"/>
<polygon points="58.4,291.0 47.8,293.6 53.9,291.3" fill="#7c7713"/>
<polygon points="58.4,291.0 59.5,294.1 47.8,293.6" fill="#1a2c85"/>
<polygon points="76.7,285.1 61.1,287.4 65.5,285.7" fill="#15227c"/>
<polygon points="67.4,289.8 61.1,287.4 76.7,285.1" fill="#15227c"/>
<polygon points="61.1,287.4 55.7,285.2 65.5,285.7" fill="#000000"/>
<polygon points="55.7,285.2 61.1,287.4 52.0,289.2" fill="#000000"/>
<polygon points="102.3,287.7 99.6,288.5 88.3,289.1" fill="#090909"/>
<polygon points="94.0,285.0 102.3,287.7 88.3,289.1" fill="#000000"/>
<polygon points="102.3,287.7 94.0,285.0 105.5,283.2" fill="#090909"/>
<polygon points="99.6,288.5 102.3,287.7 108.3,288.4" fill="#000000"/>
<polygon points="85.7,290.2 78.3,291.7 88.3,289.1" fill="#136327"/>
<polygon points="78.3,291.7 85.7,290.2 81.2,293.9" fill="#000000"/>
<polygon points="99.6,288.5 85.7,290.2 88.3,289.1" fill="#15227c"/>
<polygon points="85.7,290.2 95.9,292.1 81.2,293.9" fill="#0e591b"/>
<polygon points="95.9,292.1 85.7,290.2 99.6,288.5" fill="#136327"/>
<polygon points="103.7,290.7 113.9,291.9 104.7,294.0" fill="#136327"/>
<polygon points="116.6,288.6 103.7,290.7 108.3,288.4" fill="#136327"/>
<polygon points="103.7,290.7 99.6,288.5 108.3,288.4" fill="#55187c"/>
<polygon points="103.7,290.7 95.9,292.1 99.6,288.5" fill="#000000"/>
<polygon points="69.8,297.3 61.1,298.4 71.1,293.9" fill="#597c85"/>
<polygon points="75.2,296.1 69.8,297.3 71.1,293.9" fill="#136327"/>
<polygon points="69.8,297.3 57.4,300.3 61.1,298.4" fill="#597c85"/>
<polygon points="57.4,300.3 69.8,297.3 60.4,302.4" fill="#000000"/>
<polygon points="106.7,279.1 108.8,281.4 100.8,280.0" fill="#7c1368"/>
<polygon points="108.8,281.4 106.7,279.1 123.4,278.0" fill="#000000"/>
<polygon points="123.4,278.0 106.7,279.1 126.8,276.5" fill="#7c1368"/>
<polygon points="118.6,280.1 123.4,278.0 125.3,280.1" fill="#7c1368"/>
<polygon points="118.6,280.1 108.8,281.4 123.4,278.0" fill="#15227c"/>
<polygon points="113.6,283.1 118.6,280.1 125.3,280.1" fill="#15227c"/>
<polygon points="108.8,281.4 118.6,280.1 105.5,283.2" fill="#13687c"/>
<polygon points="118.6,280.1 113.6,283.1 105.5,283.2" fill="#7c1368"/>
<polygon points="67.8,303.9 75.6,301.5 80.7,303.7" fill="#000000"/>
<polygon points="75.6,301.5 67.8,303.9 60.4,302.4" fill="#7c1368"/>
<polygon points="102.9,295.8 95.2,300.5 87.3,297.8" fill="#80186d"/>
<polygon points="113.9,291.9 102.9,295.8 104.7,294.0" fill="#136327"/>
<polygon points="117.1,295.6 102.9,295.8 113.9,291.9" fill="#55187c"/>
<polygon points="92.3,295.2 103.7,290.7 104.7,294.0" fill="#15227c"/>
<polygon points="103.7,290.7 92.3,295.2 95.9,292.1" fill="#80186d"/>
<polygon points="102.9,295.8 92.3,295.2 104.7,294.0" fill="#0e591b"/>
<polygon points="92.3,295.2 102.9,295.8 87.3,297.8" fill="#80186d"/>
<polygon points="63.7,294.7 52.6,296.9 59.5,294.1" fill="#597c85"/>
<polygon points="52.6,296.9 63.7,294.7 61.1,298.4" fill="#000000"/>
<polygon points="57.4,300.3 52.6,296.9 61.1,298.4" fill="#6d0e59"/>
<polygon points="59.5,294.1 52.6,296.9 47.8,293.6" fill="#55187c"/>
<polygon points="241.9,264.5 229.0,268.5 234.2,265.5" fill="#136327"/>
<polygon points="246.5,263.0 241.9,264.5 234.2,265.5" fill="#000000"/>
<polygon points="241.9,264.5 246.5,263.0 256.4,262.7" fill="#1a2c85"/>
<polygon points="241.9,264.5 254.1,265.3 245.9,267.1" fill="#7c131d"/>
<polygon points="254.1,265.3 241.9,264.5 256.4,262.7" fill="#7c131d"/>
<polygon points="229.0,268.5 243.6,267.6 232.4,270.1" fill="#1a2c85"/>
<polygon points="243.6,267.6 241.9,264.5 245.9,267.1" fill="#136327"/>
<polygon points="241.9,264.5 243.6,267.6 229.0,268.5" fill="#1a2c85"/>
<polygon points="229.8,270.7 229.0,268.5 232.4,270.1" fill="#1a2c85"/>
<polygon points="229.0,268.5 229.8,270.7 222.4,272.3" fill="#7c131d"/>
<polygon points="236.4,257.2 226.3,260.8 220.0,261.3" fill="#090909"/>
<polygon points="226.3,260.8 236.4,257.2 231.8,260.0" fill="#6d0e59"/>
<polygon points="230.0,262.4 226.3,260.8 231.8,260.0" fill="#7c7713"/>
<polygon points="244.5,261.6 230.0,262.4 248.7,260.6" fill="#7c7713"/>
<polygon points="244.5,261.6 246.5,263.0 234.2,265.5" fill="#80186d"/>
<polygon points="246.5,263.0 244.5,261.6 248.7,260.6" fill="#0e591b"/>
<polygon points="221.2,265.2 203.1,269.6 209.8,266.2" fill="#80186d"/>
<polygon points="221.2,265.2 244.5,261.6 234.2,265.5" fill="#7c131d"/>
<polygon points="244.5,261.6 221.2,265.2 230.0,262.4" fill="#0e591b"/>
<polygon points="222.9,268.8 221.2,265.2 234.2,265.5" fill="#7c7713"/>
<polygon points="141.9,270.3 141.1,269.2 151.2,267.2" fill="#000000"/>
<polygon points="128.2,273.2 141.9,270.3 134.4,273.1" fill="#7c7713"/>
<polygon points="141.9,270.3 128.2,273.2 141.1,269.2" fill="#0e591b"/>
<polygon points="123.4,278.0 136.3,276.5 125.3,280.1" fill="#0e591b"/>
<polygon points="136.3,276.5 123.4,278.0 126.8,276.5" fill="#136327"/>
<polygon points="141.5,275.1 136.3,276.5 126.8,276.5" fill="#7c131d"/>
<polygon points="146.3,274.7 136.3,276.5 141.5,275.1" fill="#13687c"/>
<polygon points="136.3,276.5 146.3,274.7 145.9,277.3" fill="#090909"/>
<polygon points="135.8,279.5 121.1,282.6 125.3,280.1" fill="#15227c"/>
<polygon points="136.3,276.5 135.8,279.5 125.3,280.1" fill="#13687c"/>
<polygon points="135.8,279.5 136.3,276.5 145.9,277.3" fill="#0e591b"/>
<polygon points="203.1,269.6 204.2,267.5 209.8,266.2" fill="#6d0e59"/>
<polygon points="204.2,267.5 194.3,267.6 209.8,266.2" fill="#1a2c85"/>
<polygon points="207.7,261.6 220.6,258.8 220.0,261.3" fill="#6d0e59"/>
<polygon points="220.6,258.8 210.2,258.1 228.2,257.1" fill="#000000"/>
<polygon points="210.2,258.1 215.9,254.6 228.2,257.1" fill="#7c7713"/>
<polygon points="215.9,254.6 210.2,258.1 211.1,255.6" fill="#000000"/>
<polygon points="207.7,271.7 211.7,270.5 222.9,268.8" fill="#1a2c85"/>
<polygon points="211.7,270.5 221.2,265.2 222.9,268.8" fill="#15227c"/>
<polygon points="221.2,265.2 211.7,270.5 203.1,269.6" fill="#55187c"/>
<polygon points="211.7,270.5 201.1,271.8 203.1,269.6" fill="#0e591b"/>
<polygon points="201.1,271.8 211.7,270.5 207.7,271.7" fill="#090909"/>
<polygon points="75.1,280.7 65.3,283.4 66.5,282.1" fill="#7c7713"/>
<polygon points="81.4,280.3 75.1,280.7 84.2,278.3" fill="#597c85"/>
<polygon points="62.3,278.7 75.1,280.7 66.5,282.1" fill="#6d0e59"/>
<polygon points="75.1,280.7 82.7,275.6 84.2,278.3" fill="#13687c"/>
<polygon points="52.9,272.1 61.7,273.5 47.0,273.2" fill="#000000"/>
<polygon points="61.7,273.5 52.9,272.1 59.0,271.0" fill="#1a2c85"/>
<polygon points="60.5,275.4 56.8,277.1 45.3,276.8" fill="#000000"/>
<polygon points="61.7,273.5 60.5,275.4 45.3,276.8" fill="#80186d"/>
<polygon points="66.6,272.1 61.7,273.5 59.0,271.0" fill="#7c131d"/>
<polygon points="56.8,277.1 41.4,278.8 45.3,276.8" fill="#597c85"/>
<polygon points="41.4,278.8 35.6,279.9 45.3,276.8" fill="#1a2c85"/>
<polygon points="41.4,278.8 37.4,282.3 35.6,279.9" fill="#80186d"/>
<polygon points="118.5,263.2 113.1,261.0 129.7,260.8" fill="#55187c"/>
<polygon points="113.1,261.0 118.5,263.2 115.8,263.5" fill="#80186d"/>
<polygon points="130.7,262.2 118.5,263.2 129.7,260.8" fill="#13687c"/>
<polygon points="118.5,263.2 130.7,262.2 119.2,266.1" fill="#000000"/>
<polygon points="108.4,266.0 118.5,263.2 119.2,266.1" fill="#000000"/>
<polygon points="118.5,263.2 108.4,266.0 115.8,263.5" fill="#7c131d"/>
<polygon points="91.6,265.0 96.3,264.1 100.2,267.1" fill="#7c7713"/>
<polygon points="164.8,259.6 179.3,259.6 174.5,261.0" fill="#000000"/>
<polygon points="179.3,259.6 164.8,259.6 185.4,257.3" fill="#7c131d"/>
<polygon points="193.9,256.4 179.3,259.6 185.4,257.3" fill="#15227c"/>
<polygon points="164.9,262.4 164.8,259.6 174.5,261.0" fill="#7c7713"/>
<polygon points="164.8,259.6 164.9,262.4 157.9,263.2" fill="#0e591b"/>
<polygon points="170.8,262.0 164.9,262.4 174.5,261.0" fill="#7c1368"/>
<polygon points="164.9,262.4 170.8,262.0 165.4,264.6" fill="#80186d"/>
<polygon points="153.1,260.0 164.8,259.6 150.5,262.0" fill="#15227c"/>
<polygon points="164.8,259.6 153.1,260.0 167.7,257.3" fill="#136327"/>
<polygon points="157.9,263.2 139.7,264.4 150.5,262.0" fill="#597c85"/>
<polygon points="139.7,264.4 133.6,268.0 133.1,265.3" fill="#000000"/>
<polygon points="128.2,273.2 119.6,272.3 122.7,271.4" fill="#000000"/>
<polygon points="110.0,273.6 119.6,272.3 107.3,274.9" fill="#80186d"/>
<polygon points="119.6,272.3 110.6,270.5 122.7,271.4" fill="#090909"/>
<polygon points="119.6,272.3 110.0,273.6 110.6,270.5" fill="#15227c"/>
<polygon points="205.2,251.9 212.3,250.8 214.9,251.4" fill="#7c131d"/>
<polygon points="199.6,247.3 212.3,250.8 198.9,249.0" fill="#090909"/>
<polygon points="183.1,252.4 183.1,253.7 174.6,255.8" fill="#0e591b"/>
<polygon points="186.1,252.1 188.5,250.2 198.9,249.0" fill="#090909"/>
<polygon points="188.5,250.2 186.1,252.1 183.1,252.4" fill="#1a2c85"/>
<polygon points="186.1,252.1 183.1,253.7 183.1,252.4" fill="#15227c"/>
<polygon points="183.1,253.7 186.1,252.1 189.5,253.4" fill="#597c85"/>
<polygon points="189.5,253.4 195.8,251.5 205.2,251.9" fill="#6d0e59"/>
<polygon points="212.3,250.8 195.8,251.5 198.9,249.0" fill="#136327"/>
<polygon points="195.8,251.5 212.3,250.8 205.2,251.9" fill="#1a2c85"/>
<polygon points="195.8,251.5 186.1,252.1 198.9,249.0" fill="#000000"/>
<polygon points="186.1,252.1 195.8,251.5 189.5,253.4" fill="#090909"/>
<polygon points="175.4,249.5 183.2,248.1 188.5,250.2" fill="#1a2c85"/>
<polygon points="175.4,249.5 170.5,253.2 170.8,250.4" fill="#1a2c85"/>
<polygon points="170.5,253.2 175.4,249.5 188.5,250.2" fill="#597c85"/>
<polygon points="199.6,247.3 188.7,247.1 194.7,246.0" fill="#80186d"/>
<polygon points="188.5,250.2 188.7,247.1 199.6,247.3" fill="#1a2c85"/>
<polygon points="183.2,248.1 188.7,247.1 188.5,250.2" fill="#090909"/>
<polygon points="148.6,288.7 143.6,289.7 141.4,287.4" fill="#7c131d"/>
<polygon points="155.9,287.0 148.6,288.7 141.4,287.4" fill="#000000"/>
<polygon points="136.2,291.4 135.7,288.5 143.6,289.7" fill="#000000"/>
<polygon points="143.6,289.7 135.7,288.5 141.4,287.4" fill="#597c85"/>
<polygon points="135.7,288.5 123.6,288.4 133.7,285.6" fill="#597c85"/>
<polygon points="145.2,285.1 135.7,288.5 133.7,285.6" fill="#000000"/>
<polygon points="135.7,288.5 145.2,285.1 141.4,287.4" fill="#597c85"/>
<polygon points="123.6,288.4 116.2,290.6 116.6,288.6" fill="#15227c"/>
<polygon points="116.2,290.6 103.7,290.7 116.6,288.6" fill="#7c131d"/>
<polygon points="103.7,290.7 116.2,290.6 113.9,291.9" fill="#55187c"/>
<polygon points="116.2,290.6 135.7,288.5 113.9,291.9" fill="#0e591b"/>
<polygon points="135.7,288.5 116.2,290.6 123.6,288.4" fill="#15227c"/>
<polygon points="127.5,286.6 116.6,288.6 121.5,285.9" fill="#7c131d"/>
<polygon points="127.5,286.6 123.6,288.4 116.6,288.6" fill="#1a2c85"/>
<polygon points="127.5,286.6 121.5,285.9 133.7,285.6" fill="#136327"/>
<polygon points="123.6,288.4 127.5,286.6 133.7,285.6" fill="#13687c"/>
<polygon points="100.1,275.7 95.0,277.3 84.2,278.3" fill="#597c85"/>
<polygon points="100.1,275.7 82.7,275.6 95.9,272.9" fill="#090909"/>
<polygon points="82.7,275.6 100.1,275.7 84.2,278.3" fill="#597c85"/>
<polygon points="110.0,273.6 100.1,275.7 95.9,272.9" fill="#55187c"/>
<polygon points="100.1,275.7 110.0,273.6 107.3,274.9" fill="#136327"/>
<polygon points="95.0,277.3 106.8,276.5 100.8,280.0" fill="#80186d"/>
<polygon points="106.8,276.5 106.7,279.1 100.8,280.0" fill="#1a2c85"/>
<polygon points="106.8,276.5 100.1,275.7 107.3,274.9" fill="#7c7713"/>
<polygon points="100.1,275.7 106.8,276.5 95.0,277.3" fill="#1a2c85"/>
<polygon points="85.0,281.4 80.8,282.4 81.4,280.3" fill="#7c1368"/>
<polygon points="80.8,282.4 75.1,280.7 81.4,280.3" fill="#1a2c85"/>
<polygon points="75.1,280.7 80.8,282.4 65.3,283.4" fill="#000000"/>
<polygon points="65.3,283.4 80.8,282.4 65.5,285.7" fill="#13687c"/>
<polygon points="80.8,282.4 76.7,285.1 65.5,285.7" fill="#000000"/>
<polygon points="80.8,282.4 85.0,281.4 89.6,281.0" fill="#13687c"/>
<polygon points="80.8,282.4 84.9,284.7 76.7,285.1" fill="#0e591b"/>
<polygon points="80.8,282.4 89.6,281.0 84.9,284.7" fill="#136327"/>
<polygon points="58.4,291.0 56.6,289.1 67.4,289.8" fill="#090909"/>
<polygon points="56.6,289.1 61.1,287.4 67.4,289.8" fill="#000000"/>
<polygon points="56.6,289.1 58.4,291.0 53.9,291.3" fill="#1a2c85"/>
<polygon points="52.0,289.2 56.6,289.1 53.9,291.3" fill="#0e591b"/>
<polygon points="61.1,287.4 56.6,289.1 52.0,289.2" fill="#13687c"/>
<polygon points="113.6,283.1 111.0,284.8 105.5,283.2" fill="#55187c"/>
<polygon points="111.0,284.8 102.3,287.7 105.5,283.2" fill="#6d0e59"/>
<polygon points="111.0,284.8 113.6,283.1 121.1,282.6" fill="#7c7713"/>
<polygon points="111.0,284.8 121.1,282.6 121.5,285.9" fill="#000000"/>
<polygon points="111.0,284.8 121.5,285.9 108.3,288.4" fill="#000000"/>
<polygon points="102.3,287.7 111.0,284.8 108.3,288.4" fill="#6d0e59"/>
<polygon points="87.3,297.8 80.1,299.5 75.2,296.1" fill="#6d0e59"/>
<polygon points="80.1,299.5 69.8,297.3 75.2,296.1" fill="#80186d"/>
<polygon points="69.8,297.3 80.1,299.5 60.4,302.4" fill="#0e591b"/>
<polygon points="80.1,299.5 75.6,301.5 60.4,302.4" fill="#7c131d"/>
<polygon points="75.6,301.5 87.5,302.2 80.7,303.7" fill="#597c85"/>
<polygon points="95.2,300.5 87.5,302.2 87.3,297.8" fill="#7c7713"/>
<polygon points="87.5,302.2 80.1,299.5 87.3,297.8" fill="#15227c"/>
<polygon points="80.1,299.5 87.5,302.2 75.6,301.5" fill="#0e591b"/>
<polygon points="102.9,295.8 113.3,296.5 106.1,298.1" fill="#7c1368"/>
<polygon points="113.3,296.5 102.9,295.8 117.1,295.6" fill="#136327"/>
<polygon points="96.4,300.2 102.9,295.8 106.1,298.1" fill="#55187c"/>
<polygon points="102.9,295.8 96.4,300.2 95.2,300.5" fill="#7c1368"/>
<polygon points="87.8,294.2 87.3,297.8 75.2,296.1" fill="#55187c"/>
<polygon points="87.8,294.2 92.3,295.2 87.3,297.8" fill="#6d0e59"/>
<polygon points="87.8,294.2 75.2,296.1 81.2,293.9" fill="#000000"/>
<polygon points="95.9,292.1 87.8,294.2 81.2,293.9" fill="#15227c"/>
<polygon points="92.3,295.2 87.8,294.2 95.9,292.1" fill="#7c1368"/>
<polygon points="226.3,260.8 225.4,263.2 220.0,261.3" fill="#000000"/>
<polygon points="225.4,263.2 226.3,260.8 230.0,262.4" fill="#7c7713"/>
<polygon points="225.4,263.2 221.2,265.2 209.8,266.2" fill="#0e591b"/>
<polygon points="221.2,265.2 225.4,263.2 230.0,262.4" fill="#13687c"/>
<polygon points="189.8,270.7 204.2,267.5 203.1,269.6" fill="#80186d"/>
<polygon points="204.2,267.5 189.8,270.7 194.3,267.6" fill="#000000"/>
<polygon points="159.7,271.6 146.3,274.7 141.5,275.1" fill="#55187c"/>
<polygon points="159.7,271.6 141.5,275.1 134.4,273.1" fill="#15227c"/>
<polygon points="141.9,270.3 159.7,271.6 134.4,273.1" fill="#0e591b"/>
<polygon points="159.7,271.6 171.2,267.8 165.4,270.8" fill="#55187c"/>
<polygon points="165.4,270.8 173.9,267.6 184.2,266.4" fill="#80186d"/>
<polygon points="171.2,267.8 173.9,267.6 165.4,270.8" fill="#1a2c85"/>
<polygon points="165.4,264.6 159.2,267.2 151.2,267.2" fill="#80186d"/>
<polygon points="159.2,267.2 141.9,270.3 151.2,267.2" fill="#15227c"/>
<polygon points="159.2,267.2 159.7,271.6 141.9,270.3" fill="#090909"/>
<polygon points="194.3,267.6 201.6,264.5 209.8,266.2" fill="#80186d"/>
<polygon points="201.6,264.5 187.9,268.0 184.2,266.4" fill="#597c85"/>
<polygon points="187.9,268.0 201.6,264.5 194.3,267.6" fill="#1a2c85"/>
<polygon points="201.5,258.9 202.0,256.1 211.1,255.6" fill="#80186d"/>
<polygon points="210.2,258.1 201.5,258.9 211.1,255.6" fill="#7c1368"/>
<polygon points="207.7,261.6 209.1,259.4 220.6,258.8" fill="#000000"/>
<polygon points="209.1,259.4 210.2,258.1 220.6,258.8" fill="#000000"/>
<polygon points="209.1,259.4 207.7,261.6 200.4,261.3" fill="#6d0e59"/>
<polygon points="201.5,258.9 209.1,259.4 200.4,261.3" fill="#80186d"/>
<polygon points="209.1,259.4 201.5,258.9 210.2,258.1" fill="#090909"/>
<polygon points="173.0,262.8 170.8,262.0 174.5,261.0" fill="#7c7713"/>
<polygon points="170.8,262.0 173.0,262.8 165.4,264.6" fill="#000000"/>
<polygon points="185.8,263.8 173.0,262.8 182.0,261.6" fill="#13687c"/>
<polygon points="185.8,263.8 173.9,267.6 171.2,267.8" fill="#136327"/>
<polygon points="173.9,267.6 185.8,263.8 184.2,266.4" fill="#090909"/>
<polygon points="198.7,277.5 189.9,279.5 187.4,277.4" fill="#136327"/>
<polygon points="210.6,274.9 207.7,271.7 213.1,274.3" fill="#7c131d"/>
<polygon points="196.9,273.8 201.1,271.8 207.7,271.7" fill="#0e591b"/>
<polygon points="201.1,271.8 196.9,273.8 186.3,273.9" fill="#597c85"/>
<polygon points="161.8,282.8 164.9,282.5 165.9,284.8" fill="#55187c"/>
<polygon points="189.9,279.5 185.6,280.4 187.4,277.4" fill="#1a2c85"/>
<polygon points="145.2,285.1 151.9,284.0 141.4,287.4" fill="#0e591b"/>
<polygon points="151.9,284.0 155.9,287.0 141.4,287.4" fill="#7c131d"/>
<polygon points="155.9,287.0 151.9,284.0 161.8,282.8" fill="#13687c"/>
<polygon points="197.2,271.1 201.1,271.8 186.3,273.9" fill="#1a2c85"/>
<polygon points="201.1,271.8 197.2,271.1 203.1,269.6" fill="#1a2c85"/>
<polygon points="189.8,270.7 197.2,271.1 186.3,273.9" fill="#0e591b"/>
<polygon points="197.2,271.1 189.8,270.7 203.1,269.6" fill="#1a2c85"/>
<polygon points="68.1,277.1 62.3,278.7 56.8,277.1" fill="#000000"/>
<polygon points="60.5,275.4 68.1,277.1 56.8,277.1" fill="#6d0e59"/>
<polygon points="75.1,280.7 68.1,277.1 82.7,275.6" fill="#7c131d"/>
<polygon points="68.1,277.1 75.1,280.7 62.3,278.7" fill="#7c131d"/>
<polygon points="66.6,272.1 62.7,270.3 69.9,268.9" fill="#55187c"/>
<polygon points="62.7,270.3 66.6,272.1 59.0,271.0" fill="#0e591b"/>
<polygon points="48.7,279.5 41.4,278.8 56.8,277.1" fill="#090909"/>
<polygon points="48.7,279.5 56.8,277.1 55.6,279.9" fill="#80186d"/>
<polygon points="46.2,280.9 48.7,279.5 55.6,279.9" fill="#090909"/>
<polygon points="48.7,279.5 46.2,280.9 37.4,282.3" fill="#000000"/>
<polygon points="41.4,278.8 48.7,279.5 37.4,282.3" fill="#597c85"/>
<polygon points="88.8,268.4 85.0,266.2 91.6,265.0" fill="#7c1368"/>
<polygon points="82.6,266.6 85.0,266.2 88.8,268.4" fill="#13687c"/>
<polygon points="105.9,265.8 96.3,264.1 105.4,262.4" fill="#0e591b"/>
<polygon points="96.3,264.1 105.9,265.8 100.2,267.1" fill="#7c7713"/>
<polygon points="105.9,265.8 105.4,262.4 115.8,263.5" fill="#000000"/>
<polygon points="105.9,265.8 108.4,266.0 100.2,267.1" fill="#1a2c85"/>
<polygon points="108.4,266.0 105.9,265.8 115.8,263.5" fill="#7c7713"/>
<polygon points="155.7,257.4 160.7,256.2 167.7,257.3" fill="#7c1368"/>
<polygon points="153.1,260.0 155.7,257.4 167.7,257.3" fill="#0e591b"/>
<polygon points="144.4,261.9 130.7,262.2 144.1,257.9" fill="#13687c"/>
<polygon points="144.4,261.9 153.1,260.0 150.5,262.0" fill="#7c7713"/>
<polygon points="139.7,264.4 144.4,261.9 150.5,262.0" fill="#80186d"/>
<polygon points="144.4,261.9 133.1,265.3 130.7,262.2" fill="#597c85"/>
<polygon points="144.4,261.9 139.7,264.4 133.1,265.3" fill="#7c131d"/>
<polygon points="129.8,269.3 141.1,269.2 122.7,271.4" fill="#55187c"/>
<polygon points="110.6,270.5 129.8,269.3 122.7,271.4" fill="#000000"/>
<polygon points="118.2,267.9 110.6,270.5 95.5,270.9" fill="#7c1368"/>
<polygon points="118.2,267.9 108.4,266.0 119.2,266.1" fill="#55187c"/>
<polygon points="108.4,266.0 118.2,267.9 95.5,270.9" fill="#1a2c85"/>
<polygon points="141.1,269.2 144.1,266.7 151.2,267.2" fill="#090909"/>
<polygon points="144.1,266.7 139.7,264.4 157.9,263.2" fill="#7c1368"/>
<polygon points="183.1,253.7 176.4,255.6 174.6,255.8" fill="#0e591b"/>
<polygon points="176.4,255.6 183.1,253.7 189.5,253.4" fill="#80186d"/>
<polygon points="176.4,255.6 189.5,253.4 185.4,257.3" fill="#13687c"/>
<polygon points="176.4,255.6 167.7,257.3 174.6,255.8" fill="#597c85"/>
<polygon points="164.8,259.6 176.4,255.6 185.4,257.3" fill="#13687c"/>
<polygon points="176.4,255.6 164.8,259.6 167.7,257.3" fill="#597c85"/>
<polygon points="128.9,293.0 135.7,288.5 136.2,291.4" fill="#6d0e59"/>
<polygon points="113.9,291.9 128.9,293.0 124.4,294.0" fill="#136327"/>
<polygon points="135.7,288.5 128.9,293.0 113.9,291.9" fill="#090909"/>
<polygon points="119.7,274.7 128.2,273.2 126.8,276.5" fill="#6d0e59"/>
<polygon points="106.7,279.1 119.7,274.7 126.8,276.5" fill="#000000"/>
<polygon points="119.7,274.7 119.6,272.3 128.2,273.2" fill="#13687c"/>
<polygon points="189.8,270.7 186.7,270.0 194.3,267.6" fill="#000000"/>
<polygon points="186.7,270.0 187.9,268.0 194.3,267.6" fill="#6d0e59"/>
<polygon points="146.3,274.7 150.6,275.0 145.9,277.3" fill="#1a2c85"/>
<polygon points="150.6,275.0 157.8,274.6 145.9,277.3" fill="#136327"/>
<polygon points="151.9,284.0 159.3,278.2 161.8,282.8" fill="#13687c"/>
<polygon points="210.7,262.9 207.7,261.6 220.0,261.3" fill="#13687c"/>
<polygon points="201.6,264.5 210.7,262.9 209.8,266.2" fill="#55187c"/>
<polygon points="210.7,262.9 225.4,263.2 209.8,266.2" fill="#15227c"/>
<polygon points="225.4,263.2 210.7,262.9 220.0,261.3" fill="#15227c"/>
<polygon points="183.5,260.7 179.3,259.6 193.9,256.4" fill="#597c85"/>
<polygon points="179.3,259.6 183.5,260.7 174.5,261.0" fill="#7c1368"/>
<polygon points="183.5,260.7 173.0,262.8 174.5,261.0" fill="#7c131d"/>
<polygon points="173.0,262.8 183.5,260.7 182.0,261.6" fill="#15227c"/>
<polygon points="164.4,266.9 185.8,263.8 171.2,267.8" fill="#090909"/>
<polygon points="164.4,266.9 159.2,267.2 165.4,264.6" fill="#80186d"/>
<polygon points="173.0,262.8 164.4,266.9 165.4,264.6" fill="#15227c"/>
<polygon points="185.8,263.8 164.4,266.9 173.0,262.8" fill="#000000"/>
<polygon points="159.7,271.6 164.4,266.9 171.2,267.8" fill="#6d0e59"/>
<polygon points="159.2,267.2 164.4,266.9 159.7,271.6" fill="#0e591b"/>
<polygon points="185.8,263.8 193.8,262.3 184.2,266.4" fill="#597c85"/>
<polygon points="193.8,262.3 201.6,264.5 184.2,266.4" fill="#6d0e59"/>
<polygon points="193.8,262.3 201.5,258.9 200.4,261.3" fill="#597c85"/>
<polygon points="207.7,261.6 193.8,262.3 200.4,261.3" fill="#7c1368"/>
<polygon points="201.6,264.5 193.8,262.3 207.7,261.6" fill="#0e591b"/>
<polygon points="193.8,262.3 185.8,263.8 182.0,261.6" fill="#7c131d"/>
<polygon points="192.1,276.0 210.6,274.9 203.2,276.5" fill="#7c1368"/>
<polygon points="210.6,274.9 192.1,276.0 207.7,271.7" fill="#000000"/>
<polygon points="192.1,276.0 196.9,273.8 207.7,271.7" fill="#7c131d"/>
<polygon points="198.7,277.5 192.1,276.0 203.2,276.5" fill="#597c85"/>
<polygon points="192.1,276.0 198.7,277.5 187.4,277.4" fill="#0e591b"/>
<polygon points="178.0,277.9 192.1,276.0 187.4,277.4" fill="#7c1368"/>
<polygon points="192.1,276.0 178.0,277.9 186.3,273.9" fill="#1a2c85"/>
<polygon points="196.9,273.8 192.1,276.0 186.3,273.9" fill="#80186d"/>
<polygon points="164.9,282.5 170.4,283.8 165.9,284.8" fill="#136327"/>
<polygon points="170.4,283.8 164.9,282.5 176.7,282.4" fill="#6d0e59"/>
<polygon points="173.2,280.2 185.6,280.4 176.7,282.4" fill="#1a2c85"/>
<polygon points="185.6,280.4 173.2,280.2 187.4,277.4" fill="#136327"/>
<polygon points="164.9,282.5 173.2,280.2 176.7,282.4" fill="#000000"/>
<polygon points="173.2,280.2 178.0,277.9 187.4,277.4" fill="#136327"/>
<polygon points="173.2,280.2 164.9,282.5 161.8,282.8" fill="#000000"/>
<polygon points="159.3,278.2 173.2,280.2 161.8,282.8" fill="#090909"/>
<polygon points="173.2,280.2 159.3,278.2 178.0,277.9" fill="#7c131d"/>
<polygon points="76.1,271.4 66.6,272.1 69.9,268.9" fill="#000000"/>
<polygon points="76.1,271.4 60.5,275.4 61.7,273.5" fill="#55187c"/>
<polygon points="66.6,272.1 76.1,271.4 61.7,273.5" fill="#136327"/>
<polygon points="76.2,267.8 76.1,271.4 69.9,268.9" fill="#7c131d"/>
<polygon points="76.1,271.4 76.2,267.8 82.2,270.2" fill="#6d0e59"/>
<polygon points="76.2,267.8 82.6,266.6 88.8,268.4" fill="#597c85"/>
<polygon points="82.2,270.2 76.2,267.8 88.8,268.4" fill="#15227c"/>
<polygon points="90.7,270.1 82.2,270.2 88.8,268.4" fill="#13687c"/>
<polygon points="95.5,270.9 90.7,270.1 100.2,267.1" fill="#6d0e59"/>
<polygon points="90.7,270.1 88.8,268.4 100.2,267.1" fill="#597c85"/>
<polygon points="150.2,257.6 155.7,257.4 153.1,260.0" fill="#0e591b"/>
<polygon points="150.2,257.6 144.4,261.9 144.1,257.9" fill="#597c85"/>
<polygon points="144.4,261.9 150.2,257.6 153.1,260.0" fill="#15227c"/>
<polygon points="155.7,257.4 150.2,257.6 160.7,256.2" fill="#000000"/>
<polygon points="147.0,254.8 150.2,257.6 144.1,257.9" fill="#55187c"/>
<polygon points="160.7,256.2 150.2,257.6 165.2,254.7" fill="#7c7713"/>
<polygon points="150.2,257.6 147.0,254.8 155.1,253.3" fill="#55187c"/>
<polygon points="165.2,254.7 150.2,257.6 155.1,253.3" fill="#7c131d"/>
<polygon points="129.8,269.3 127.6,267.2 133.6,268.0" fill="#7c7713"/>
<polygon points="133.6,268.0 127.6,267.2 133.1,265.3" fill="#15227c"/>
<polygon points="127.6,267.2 129.8,269.3 110.6,270.5" fill="#7c131d"/>
<polygon points="118.2,267.9 127.6,267.2 110.6,270.5" fill="#597c85"/>
<polygon points="133.1,265.3 127.6,267.2 119.2,266.1" fill="#13687c"/>
<polygon points="127.6,267.2 118.2,267.9 119.2,266.1" fill="#597c85"/>
<polygon points="140.5,267.3 144.1,266.7 141.1,269.2" fill="#1a2c85"/>
<polygon points="129.8,269.3 140.5,267.3 141.1,269.2" fill="#000000"/>
<polygon points="140.5,267.3 129.8,269.3 133.6,268.0" fill="#55187c"/>
<polygon points="140.5,267.3 133.6,268.0 139.7,264.4" fill="#0e591b"/>
<polygon points="144.1,266.7 140.5,267.3 139.7,264.4" fill="#80186d"/>
<polygon points="144.1,266.7 155.9,265.1 151.2,267.2" fill="#7c131d"/>
<polygon points="155.9,265.1 144.1,266.7 157.9,263.2" fill="#7c7713"/>
<polygon points="155.9,265.1 165.4,264.6 151.2,267.2" fill="#136327"/>
<polygon points="164.9,262.4 155.9,265.1 157.9,263.2" fill="#13687c"/>
<polygon points="155.9,265.1 164.9,262.4 165.4,264.6" fill="#7c1368"/>
<polygon points="106.8,276.5 114.2,275.3 106.7,279.1" fill="#136327"/>
<polygon points="114.2,275.3 119.7,274.7 106.7,279.1" fill="#6d0e59"/>
<polygon points="114.2,275.3 106.8,276.5 107.3,274.9" fill="#0e591b"/>
<polygon points="119.6,272.3 114.2,275.3 107.3,274.9" fill="#0e591b"/>
<polygon points="119.7,274.7 114.2,275.3 119.6,272.3" fill="#13687c"/>
<polygon points="186.7,270.0 174.4,271.2 187.9,268.0" fill="#55187c"/>
<polygon points="174.4,271.2 169.1,272.4 165.4,270.8" fill="#0e591b"/>
<polygon points="174.4,271.2 165.4,270.8 184.2,266.4" fill="#55187c"/>
<polygon points="187.9,268.0 174.4,271.2 184.2,266.4" fill="#0e591b"/>
<polygon points="150.6,275.0 156.8,272.8 157.8,274.6" fill="#15227c"/>
<polygon points="156.8,272.8 159.7,271.6 165.4,270.8" fill="#0e591b"/>
<polygon points="159.7,271.6 156.8,272.8 146.3,274.7" fill="#7c1368"/>
<polygon points="156.8,272.8 150.6,275.0 146.3,274.7" fill="#000000"/>
<polygon points="169.1,272.4 156.8,272.8 165.4,270.8" fill="#597c85"/>
<polygon points="157.8,274.6 156.8,272.8 169.1,272.4" fill="#136327"/>
<polygon points="157.8,274.6 163.8,276.2 145.9,277.3" fill="#597c85"/>
<polygon points="178.0,277.9 171.0,276.5 186.3,273.9" fill="#7c1368"/>
<polygon points="159.3,278.2 171.0,276.5 178.0,277.9" fill="#7c7713"/>
<polygon points="163.8,276.2 171.0,276.5 159.3,278.2" fill="#7c131d"/>
<polygon points="121.5,285.9 139.3,281.5 133.7,285.6" fill="#597c85"/>
<polygon points="121.1,282.6 139.3,281.5 121.5,285.9" fill="#1a2c85"/>
<polygon points="135.8,279.5 139.3,281.5 121.1,282.6" fill="#7c131d"/>
<polygon points="206.4,263.2 201.6,264.5 207.7,261.6" fill="#0e591b"/>
<polygon points="210.7,262.9 206.4,263.2 207.7,261.6" fill="#136327"/>
<polygon points="206.4,263.2 210.7,262.9 201.6,264.5" fill="#090909"/>
<polygon points="194.2,259.8 193.8,262.3 182.0,261.6" fill="#13687c"/>
<polygon points="193.8,262.3 194.2,259.8 201.5,258.9" fill="#000000"/>
<polygon points="183.5,260.7 194.2,259.8 182.0,261.6" fill="#7c7713"/>
<polygon points="201.5,258.9 194.2,259.8 202.0,256.1" fill="#6d0e59"/>
<polygon points="194.2,259.8 193.9,256.4 202.0,256.1" fill="#13687c"/>
<polygon points="194.2,259.8 183.5,260.7 193.9,256.4" fill="#6d0e59"/>
<polygon points="77.0,275.5 68.1,277.1 60.5,275.4" fill="#0e591b"/>
<polygon points="68.1,277.1 77.0,275.5 82.7,275.6" fill="#1a2c85"/>
<polygon points="83.4,273.1 76.1,271.4 82.2,270.2" fill="#6d0e59"/>
<polygon points="90.7,270.1 83.4,273.1 82.2,270.2" fill="#15227c"/>
<polygon points="76.1,271.4 83.4,273.1 60.5,275.4" fill="#597c85"/>
<polygon points="83.4,273.1 77.0,275.5 60.5,275.4" fill="#7c7713"/>
<polygon points="83.4,273.1 90.7,270.1 95.5,270.9" fill="#0e591b"/>
<polygon points="77.0,275.5 83.4,273.1 82.7,275.6" fill="#55187c"/>
<polygon points="83.4,273.1 95.5,270.9 95.9,272.9" fill="#6d0e59"/>
<polygon points="82.7,275.6 83.4,273.1 95.9,272.9" fill="#000000"/>
<polygon points="163.8,276.2 148.4,279.4 145.9,277.3" fill="#090909"/>
<polygon points="148.4,279.4 163.8,276.2 159.3,278.2" fill="#000000"/>
<polygon points="172.7,274.6 189.8,270.7 186.3,273.9" fill="#15227c"/>
<polygon points="171.0,276.5 172.7,274.6 186.3,273.9" fill="#55187c"/>
<polygon points="172.7,274.6 171.0,276.5 163.8,276.2" fill="#55187c"/>
<polygon points="172.7,274.6 186.7,270.0 189.8,270.7" fill="#7c1368"/>
<polygon points="140.4,279.5 139.3,281.5 135.8,279.5" fill="#6d0e59"/>
<polygon points="140.4,279.5 148.4,279.4 139.3,281.5" fill="#000000"/>
<polygon points="140.4,279.5 135.8,279.5 145.9,277.3" fill="#0e591b"/>
<polygon points="148.4,279.4 140.4,279.5 145.9,277.3" fill="#6d0e59"/>
<polygon points="148.4,279.4 145.1,282.2 139.3,281.5" fill="#7c1368"/>
<polygon points="145.1,282.2 151.9,284.0 145.2,285.1" fill="#136327"/>
<polygon points="145.1,282.2 159.3,278.2 151.9,284.0" fill="#7c7713"/>
<polygon points="145.1,282.2 148.4,279.4 159.3,278.2" fill="#597c85"/>
<polygon points="145.1,282.2 145.2,285.1 133.7,285.6" fill="#7c7713"/>
<polygon points="139.3,281.5 145.1,282.2 133.7,285.6" fill="#6d0e59"/>
<polygon points="168.9,273.9 172.7,274.6 163.8,276.2" fill="#7c7713"/>
<polygon points="168.9,273.9 157.8,274.6 169.1,272.4" fill="#6d0e59"/>
<polygon points="168.9,273.9 163.8,276.2 157.8,274.6" fill="#80186d"/>
<polygon points="174.4,271.2 168.9,273.9 169.1,272.4" fill="#1a2c85"/>
<polygon points="168.9,273.9 174.4,271.2 186.7,270.0" fill="#15227c"/>
<polygon points="172.7,274.6 168.9,273.9 186.7,270.0" fill="#000000"/>
</g>
</svg>
<svg class="abs" style="left:0;top:330px" width="479" height="29" viewBox="85 501 479 29" font-family="Liberation Sans" font-size="9.2" fill="#cfcfcf">
<text x="217.6" y="516.4" textLength="20.4" lengthAdjust="spacingAndGlyphs">size:</text>
<text x="247.0" y="516.4" textLength="16.0" lengthAdjust="spacingAndGlyphs">640</text>
<text x="271.0" y="516.4" textLength="16.0" lengthAdjust="spacingAndGlyphs">480</text>
<text x="291.0" y="516.4" textLength="26.3" lengthAdjust="spacingAndGlyphs">zoom:</text>
<text x="324.4" y="516.4" textLength="24.6" lengthAdjust="spacingAndGlyphs">0.819</text>
<text x="374.5" y="516.4" textLength="59.0" lengthAdjust="spacingAndGlyphs">(mental ray)</text>
<text x="183.6" y="528.3" textLength="32.2" lengthAdjust="spacingAndGlyphs">Frame:</text>
<text x="222.4" y="528.3" textLength="3.6" lengthAdjust="spacingAndGlyphs">1</text>
<text x="255.8" y="528.3" textLength="61.5" lengthAdjust="spacingAndGlyphs">Render Time:</text>
<text x="323.0" y="528.3" textLength="20.4" lengthAdjust="spacingAndGlyphs">0:13</text>
<text x="373.1" y="528.3" textLength="37.7" lengthAdjust="spacingAndGlyphs">Camera:</text>
<text x="417.0" y="528.3" textLength="24.0" lengthAdjust="spacingAndGlyphs">persp</text>
</svg>
      </div></div>
    </div>
    <div class="bottom">
<div class="abs" style="left:0;top:10px;width:563px;height:13px;background:linear-gradient(#e2e2e2,#f8f8f8 30%,#ffffff 60%,#f4f4f4);"></div>
<div class="abs" style="left:2px;top:10px;width:526px;height:11px;border-radius:6px;background:linear-gradient(#dcdcdc,#f6f6f6 35%,#fff 70%,#f2f2f2);box-shadow:inset 0 1px 1px rgba(0,0,0,.18);"></div>
<div class="abs" style="left:5.5px;top:10.6px;width:13.2px;height:7.8px;border-radius:4.5px;background:linear-gradient(#3a78d8,#8cc4f8 30%,#3f94ee 55%,#7cc8ff);box-shadow:0 0 0 1px #5a6a8a;"></div>
<div class="abs" style="left:529px;top:10px;width:22px;height:11px;background:linear-gradient(#f4f4f4,#fdfdfd);"></div>
<svg class="abs" style="left:529px;top:10px" width="24" height="11" viewBox="0 0 24 11"><polygon points="7.5,3 7.5,8 4,5.5" fill="#111"/><polygon points="15.5,3 15.5,8 19,5.5" fill="#111"/><path d="M11.5,1 V10" stroke="#d8d8d8" stroke-width="1"/></svg>

    </div>
  </div></div>
<div class="abs" style="left:555px;top:443px;width:13px;height:14px;background:#fff;"></div>
<svg class="abs" style="left:555px;top:443px" width="13" height="14" viewBox="0 0 13 14"><path d="M2,13 L12,3 M6,13 L12,7 M10,13 L12,11" stroke="#9a9a9a" stroke-width="1"/></svg>
</div>

<svg class="abs" style="left:638px;top:0" width="385" height="667" viewBox="638 0 385 667" font-family="Liberation Sans" font-size="10.8" fill="#222">
<defs>
<linearGradient id="tabsel" x1="0" y1="0" x2="0" y2="1"><stop offset="0" stop-color="#a4d0f6"/><stop offset=".48" stop-color="#7cbcf4"/><stop offset=".52" stop-color="#62b0f2"/><stop offset="1" stop-color="#b8e4ff"/></linearGradient>
<linearGradient id="tabn" x1="0" y1="0" x2="0" y2="1"><stop offset="0" stop-color="#ffffff"/><stop offset=".5" stop-color="#f6f6f6"/><stop offset=".52" stop-color="#ececec"/><stop offset="1" stop-color="#f4f4f4"/></linearGradient>
<linearGradient id="btn" x1="0" y1="0" x2="0" y2="1"><stop offset="0" stop-color="#ffffff"/><stop offset=".5" stop-color="#f4f4f4"/><stop offset=".52" stop-color="#ececec"/><stop offset="1" stop-color="#f2f2f2"/></linearGradient>
<linearGradient id="sbt" x1="0" y1="0" x2="1" y2="0"><stop offset="0" stop-color="#2c6cd0"/><stop offset=".16" stop-color="#5a9fe8"/><stop offset=".5" stop-color="#8cc4f6"/><stop offset=".86" stop-color="#b2e6fe"/><stop offset="1" stop-color="#6aa8e4"/></linearGradient>
<linearGradient id="sbtrack" x1="0" y1="0" x2="1" y2="0"><stop offset="0" stop-color="#c8c8c8"/><stop offset=".3" stop-color="#efefef"/><stop offset="1" stop-color="#fbfbfb"/></linearGradient>
<linearGradient id="splitg" x1="0" y1="0" x2="0" y2="1"><stop offset="0" stop-color="#c6c6c6"/><stop offset=".35" stop-color="#f6f6f6"/><stop offset="1" stop-color="#e2e2e2"/></linearGradient>
<linearGradient id="hsb" x1="0" y1="0" x2="0" y2="1"><stop offset="0" stop-color="#cfcfcf"/><stop offset=".3" stop-color="#f0f0f0"/><stop offset="1" stop-color="#fafafa"/></linearGradient>
<linearGradient id="cbg" x1="0" y1="0" x2="0" y2="1"><stop offset="0" stop-color="#fdfdfd"/><stop offset="1" stop-color="#e6e6e6"/></linearGradient>
<linearGradient id="cbb" x1="0" y1="0" x2="0" y2="1"><stop offset="0" stop-color="#6fa6ea"/><stop offset=".45" stop-color="#5c9ee8"/><stop offset="1" stop-color="#c4e6ff"/></linearGradient>
<clipPath id="scrollclip"><rect x="644" y="163" width="379" height="369"/></clipPath>
<g id="chk"><rect x="0" y="0" width="10" height="10" fill="#fff"/><rect x="5" y="0" width="5" height="5" fill="#000"/><rect x="0" y="5" width="5" height="5" fill="#000"/></g>
<g id="inic"><path d="M937.2,45.6 H945.5 V55 H937.2" fill="none" stroke="#111" stroke-width="1.1"/><path d="M933.4,48.5 H936.6 V47.3 L941,50.3 L936.6,53.3 V52.1 H933.4 Z" fill="#000"/></g>
</defs>
<rect x="638" y="0" width="385" height="667" fill="#ededed"/>
<rect x="638" y="0" width="5.6" height="667" fill="#d2d2d2"/>
<rect x="643.2" y="0" width="1" height="667" fill="#e2e2e2"/>
<rect x="644.5" y="16.4" width="385" height="3.6" rx="1.8" fill="#d2d2d2" stroke="#a8a8a8" stroke-width="1"/>
<rect x="656.5" y="-3" width="115" height="19" fill="url(#tabsel)"/><path d="M656.8,-1 V16 M771.2,-1 V16" stroke="#2a58b4" stroke-width="1.4"/>
<rect x="772.5" y="-3" width="130.5" height="19" rx="2" fill="url(#tabn)" stroke="#a4a4a4" stroke-width="1"/>
<rect x="903.5" y="-3" width="92" height="19" rx="2" fill="url(#tabn)" stroke="#a4a4a4" stroke-width="1"/>
<rect x="996.5" y="-3" width="16" height="19" rx="2" fill="url(#tabn)" stroke="#a4a4a4" stroke-width="1"/>
<polygon points="1000.4,6 1007.8,6 1004.1,10.9" fill="#111"/>
<text x="668" y="10" textLength="92" lengthAdjust="spacingAndGlyphs">mia_material_x1SG</text>
<text x="783.5" y="10" textLength="107.5" lengthAdjust="spacingAndGlyphs">parti_volume_photon1</text>
<text x="915" y="10" textLength="68.4" lengthAdjust="spacingAndGlyphs">parti_volume3</text>
<text x="689.6" y="42" textLength="74.9" lengthAdjust="spacingAndGlyphs">shadingEngine:</text>
<rect x="781.0" y="50.4" width="142.5" height="21.8" fill="#fff"/>
<path d="M781.0,50.9 H923.5" stroke="#858585" stroke-width="1"/><path d="M782.0,51.9 H922.5" stroke="#d4d4d4" stroke-width="1"/>
<path d="M781.5,51.4 V72.2" stroke="#a4a4a4" stroke-width="1"/><path d="M923.0,51.4 V72.2" stroke="#bcbcbc" stroke-width="1"/>
<path d="M781.0,71.7 H923.5" stroke="#dedede" stroke-width="1"/>
<text x="784.6" y="64.6" textLength="107.6" lengthAdjust="spacingAndGlyphs" font-size="12.4">mia_material_x1SG</text>
<use href="#inic"/>
<path d="M945.6,65.8 H937.4 V75.2 H945.6" fill="none" stroke="#111" stroke-width="1.1"/><path d="M943.2,68.4 H946.2 V67.2 L950.4,70.2 L946.2,73.2 V72 H943.2 Z" fill="#000"/>
<rect x="960.5" y="32.5" width="70" height="17" fill="url(#btn)" stroke="#9a9a9a" stroke-width="1"/>
<path d="M960.5,50.5 H1030.5" stroke="#c8c8c8" stroke-width="1"/>
<rect x="960.5" y="52.5" width="70" height="17" fill="url(#btn)" stroke="#9a9a9a" stroke-width="1"/>
<path d="M960.5,70.5 H1030.5" stroke="#c8c8c8" stroke-width="1"/>
<rect x="960.5" y="72.5" width="30" height="17.5" fill="#f0f0f0" stroke="#c4c4c4" stroke-width="1"/>
<rect x="993.5" y="72.5" width="40" height="17.5" fill="url(#btn)" stroke="#9a9a9a" stroke-width="1"/>
<path d="M993.5,91.0 H1033.5" stroke="#c8c8c8" stroke-width="1"/>
<text x="978.1" y="44.7" textLength="27.4" lengthAdjust="spacingAndGlyphs">Focus</text>
<text x="974.7" y="64.7" textLength="34.1" lengthAdjust="spacingAndGlyphs">Presets</text>
<text x="962.8" y="84.7" textLength="25" lengthAdjust="spacingAndGlyphs" fill="#aaaaaa">Show</text>
<text x="997.6" y="84.7" textLength="21.4" lengthAdjust="spacingAndGlyphs">Hide</text>
<text x="653.3" y="109.8" textLength="110.3" lengthAdjust="spacingAndGlyphs">Shading Group Sample</text>
<rect x="781.2" y="99.7" width="57.8" height="57.8" fill="#212121"/>
<polygon points="835.7,135.4 828.9,147.3 817.0,154.1 803.4,154.1 791.5,147.3 784.7,135.4 784.7,121.8 791.5,109.9 803.4,103.1 817.0,103.1 828.9,109.9 835.7,121.8" fill="#c6c6c6"/>
<g fill="none" stroke="#3a3a3a" stroke-width=".8"><path d="M800,112.4 L813.6,108.8 L828.4,112.8 L814.8,116 Z M800,112.4 V126.6 M814.8,116 V137.8 M828.4,112.8 V130.2 L814.8,137"/><circle cx="801.4" cy="137.6" r="10.8"/></g>
<path d="M786,104 L836,153.6 M836,104 L786,153.6" stroke="#f41000" stroke-width="5.2"/>
<g clip-path="url(#scrollclip)">
<rect x="644.5" y="163.5" width="367.5" height="88" fill="none" stroke="#a2a2a2" stroke-width="1"/>
<path d="M645.5,164.5 H1011.0" stroke="#fafafa" stroke-width="1"/>
<polygon points="653.2,170.8 660.6,170.8 656.9000000000001,177.20000000000002" fill="#7e7e7e"/>
<text x="665" y="175.9" textLength="131.4" lengthAdjust="spacingAndGlyphs" font-weight="bold">Shading Group Attributes</text>
<rect x="779.0" y="183.0" width="192" height="22.3" fill="#fff"/>
<path d="M779.0,183.5 H971.0" stroke="#858585" stroke-width="1"/><path d="M780.0,184.5 H970.0" stroke="#d4d4d4" stroke-width="1"/>
<path d="M779.5,184.0 V205.3" stroke="#a4a4a4" stroke-width="1"/><path d="M970.5,184.0 V205.3" stroke="#bcbcbc" stroke-width="1"/>
<path d="M779.0,204.8 H971.0" stroke="#dedede" stroke-width="1"/>
<text x="695.8" y="192.8" textLength="78.8" lengthAdjust="spacingAndGlyphs">Surface material</text>
<use href="#chk" x="978" y="185.4"/>
<rect x="779.0" y="206.0" width="192" height="21.6" fill="#fff"/>
<path d="M779.0,206.5 H971.0" stroke="#858585" stroke-width="1"/><path d="M780.0,207.5 H970.0" stroke="#d4d4d4" stroke-width="1"/>
<path d="M779.5,207.0 V227.6" stroke="#a4a4a4" stroke-width="1"/><path d="M970.5,207.0 V227.6" stroke="#bcbcbc" stroke-width="1"/>
<path d="M779.0,227.1 H971.0" stroke="#dedede" stroke-width="1"/>
<text x="694.8" y="215.7" textLength="79.8" lengthAdjust="spacingAndGlyphs">Volume material</text>
<use href="#chk" x="978" y="208.3"/>
<rect x="779.0" y="228.5" width="192" height="21.4" fill="#fff"/>
<path d="M779.0,229.0 H971.0" stroke="#858585" stroke-width="1"/><path d="M780.0,230.0 H970.0" stroke="#d4d4d4" stroke-width="1"/>
<path d="M779.5,229.5 V249.9" stroke="#a4a4a4" stroke-width="1"/><path d="M970.5,229.5 V249.9" stroke="#bcbcbc" stroke-width="1"/>
<path d="M779.0,249.4 H971.0" stroke="#dedede" stroke-width="1"/>
<text x="683.5" y="238.3" textLength="91.1" lengthAdjust="spacingAndGlyphs">Displacement mat.</text>
<use href="#chk" x="978" y="231.2"/>
<rect x="644.5" y="251.5" width="367.5" height="300" fill="none" stroke="#a2a2a2" stroke-width="1"/>
<path d="M645.5,252.5 H1011.0" stroke="#fafafa" stroke-width="1"/>
<polygon points="653.2,259.4 660.6,259.4 656.9000000000001,265.79999999999995" fill="#7e7e7e"/>
<text x="665.4" y="264.5" textLength="55" lengthAdjust="spacingAndGlyphs" font-weight="bold">mental ray</text>
<rect x="647.5" y="271.5" width="363" height="20" fill="none" stroke="#a2a2a2" stroke-width="1"/>
<path d="M648.5,272.5 H1009.5" stroke="#fafafa" stroke-width="1"/>
<polygon points="655.8,279.4 655.8,286.79999999999995 662.1999999999999,283.09999999999997" fill="#7e7e7e"/>
<text x="667" y="283.5" textLength="26.6" lengthAdjust="spacingAndGlyphs" font-weight="bold">Flags</text>
<rect x="647.5" y="291.5" width="363" height="20" fill="none" stroke="#a2a2a2" stroke-width="1"/>
<path d="M648.5,292.5 H1009.5" stroke="#fafafa" stroke-width="1"/>
<polygon points="655.8,299.6 655.8,307.0 662.1999999999999,303.3" fill="#7e7e7e"/>
<text x="667" y="303.8" textLength="46.6" lengthAdjust="spacingAndGlyphs" font-weight="bold">Contours</text>
<rect x="647.5" y="311.5" width="363" height="300" fill="none" stroke="#a2a2a2" stroke-width="1"/>
<path d="M648.5,312.5 H1009.5" stroke="#fafafa" stroke-width="1"/>
<polygon points="655.2,319.8 662.6,319.8 658.9000000000001,326.2" fill="#7e7e7e"/>
<text x="667" y="323.8" textLength="83.4" lengthAdjust="spacingAndGlyphs" font-weight="bold">Custom Shaders</text>
<rect x="783.2" y="333.6" width="12" height="12" rx="2" fill="url(#cbg)" stroke="#9a9a9a" stroke-width="1"/>
<text x="799.3" y="343.4" textLength="127.9" lengthAdjust="spacingAndGlyphs">Suppress all Maya Shaders</text>
<rect x="783.2" y="360.2" width="12" height="12" rx="2" fill="url(#cbb)" stroke="#3a5c9c" stroke-width="1"/>
<path d="M785.7,365.7 L788.7,369.59999999999997 L795.0,358.4" fill="none" stroke="#15151f" stroke-width="1.75" stroke-linejoin="miter"/>
<text x="799.3" y="369.7" textLength="133.2" lengthAdjust="spacingAndGlyphs">Export with Shading Engine</text>
<rect x="781.0" y="384.0" width="192" height="22.3" fill="#fff"/>
<path d="M781.0,384.5 H973.0" stroke="#858585" stroke-width="1"/><path d="M782.0,385.5 H972.0" stroke="#d4d4d4" stroke-width="1"/>
<path d="M781.5,385.0 V406.3" stroke="#a4a4a4" stroke-width="1"/><path d="M972.5,385.0 V406.3" stroke="#bcbcbc" stroke-width="1"/>
<path d="M781.0,405.8 H973.0" stroke="#dedede" stroke-width="1"/>
<text x="701.0" y="393.9" textLength="74.9" lengthAdjust="spacingAndGlyphs">Material Shader</text>
<text x="783.4" y="398.1" textLength="77.19999999999999" lengthAdjust="spacingAndGlyphs" font-size="12.4">Stained_glass</text>
<use href="#inic" x="44.6" y="341.1"/>
<rect x="781.0" y="407.0" width="192" height="20.8" fill="#fff"/>
<path d="M781.0,407.5 H973.0" stroke="#858585" stroke-width="1"/><path d="M782.0,408.5 H972.0" stroke="#d4d4d4" stroke-width="1"/>
<path d="M781.5,408.0 V427.8" stroke="#a4a4a4" stroke-width="1"/><path d="M972.5,408.0 V427.8" stroke="#bcbcbc" stroke-width="1"/>
<path d="M781.0,427.3 H973.0" stroke="#dedede" stroke-width="1"/>
<text x="702.6" y="416.6" textLength="73.3" lengthAdjust="spacingAndGlyphs">Shadow Shader</text>
<text x="783.4" y="421.1" textLength="77.19999999999999" lengthAdjust="spacingAndGlyphs" font-size="12.4">Stained_glass</text>
<use href="#inic" x="44.6" y="364.1"/>
<rect x="783.2" y="432.4" width="12" height="12" rx="2" fill="url(#cbb)" stroke="#3a5c9c" stroke-width="1"/>
<path d="M785.7,437.9 L788.7,441.79999999999995 L795.0,430.59999999999997" fill="none" stroke="#15151f" stroke-width="1.75" stroke-linejoin="miter"/>
<text x="799.3" y="442.1" textLength="136.6" lengthAdjust="spacingAndGlyphs">Export with Volume Sampler</text>
<rect x="781.0" y="456.0" width="192" height="21.8" fill="#fff"/>
<path d="M781.0,456.5 H973.0" stroke="#858585" stroke-width="1"/><path d="M782.0,457.5 H972.0" stroke="#d4d4d4" stroke-width="1"/>
<path d="M781.5,457.0 V477.8" stroke="#a4a4a4" stroke-width="1"/><path d="M972.5,457.0 V477.8" stroke="#bcbcbc" stroke-width="1"/>
<path d="M781.0,477.3 H973.0" stroke="#dedede" stroke-width="1"/>
<text x="703.5" y="466.1" textLength="72.4" lengthAdjust="spacingAndGlyphs">Volume Shader</text>
<text x="783.4" y="470.1" textLength="83.19999999999999" lengthAdjust="spacingAndGlyphs" font-size="12.4">parti_volume3</text>
<use href="#inic" x="44.6" y="413.1"/>
<rect x="781.0" y="479.3" width="192" height="22.2" fill="#fff"/>
<path d="M781.0,479.8 H973.0" stroke="#858585" stroke-width="1"/><path d="M782.0,480.8 H972.0" stroke="#d4d4d4" stroke-width="1"/>
<path d="M781.5,480.3 V501.5" stroke="#a4a4a4" stroke-width="1"/><path d="M972.5,480.3 V501.5" stroke="#bcbcbc" stroke-width="1"/>
<path d="M781.0,501.0 H973.0" stroke="#dedede" stroke-width="1"/>
<text x="706.5" y="488.5" textLength="69.4" lengthAdjust="spacingAndGlyphs">Photon Shader</text>
<text x="783.4" y="493.40000000000003" textLength="129.2" lengthAdjust="spacingAndGlyphs" font-size="12.4">parti_volume_photon1</text>
<use href="#inic" x="44.6" y="436.40000000000003"/>
<rect x="781.0" y="502.5" width="192" height="21.6" fill="#fff"/>
<path d="M781.0,503.0 H973.0" stroke="#858585" stroke-width="1"/><path d="M782.0,504.0 H972.0" stroke="#d4d4d4" stroke-width="1"/>
<path d="M781.5,503.5 V524.1" stroke="#a4a4a4" stroke-width="1"/><path d="M972.5,503.5 V524.1" stroke="#bcbcbc" stroke-width="1"/>
<path d="M781.0,523.6 H973.0" stroke="#dedede" stroke-width="1"/>
<text x="678.5" y="511.4" textLength="97.4" lengthAdjust="spacingAndGlyphs">Phot Volume Shader</text>
<use href="#chk" x="980" y="505.6"/>
<rect x="781.0" y="525.3" width="192" height="22" fill="#fff"/>
<path d="M781.0,525.8 H973.0" stroke="#858585" stroke-width="1"/><path d="M782.0,526.8 H972.0" stroke="#d4d4d4" stroke-width="1"/>
<path d="M781.5,526.3 V547.3" stroke="#a4a4a4" stroke-width="1"/><path d="M972.5,526.3 V547.3" stroke="#bcbcbc" stroke-width="1"/>
<path d="M781.0,546.8 H973.0" stroke="#dedede" stroke-width="1"/>
<text x="674.2" y="534.3" textLength="101.7" lengthAdjust="spacingAndGlyphs">Displacement Shader</text>
<use href="#chk" x="980" y="528.4"/>
</g>
<rect x="1012.5" y="163.5" width="11" height="369" fill="url(#sbtrack)" stroke="#b8b8b8" stroke-width="1"/>
<rect x="1013" y="498" width="10" height="12" fill="#ededed"/><path d="M1013.2,164 V504 A4.6,4.6 0 0 0 1022.4,504 V164 Z" fill="url(#sbtrack)" stroke="#bababa" stroke-width=".8"/>
<rect x="1013.3" y="168.4" width="8.5" height="255.6" rx="4.25" fill="url(#sbt)" stroke="#2a5cb8" stroke-width=".7"/>
<path d="M1013,520.5 H1023" stroke="#c4c4c4" stroke-width="1"/>
<polygon points="1015.6,516.6 1020.4,516.6 1018,513" fill="#222"/><polygon points="1015.6,524.4 1020.4,524.4 1018,528" fill="#222"/>
<rect x="638" y="532" width="385" height="10.5" fill="url(#splitg)"/><path d="M638,532.5 H1023" stroke="#a8a8a8" stroke-width="1"/>
<path d="M830,537.5 H841.4 M830,539.8 H841.4" stroke="#a0a0a0" stroke-width="1"/>
<text x="656" y="555.4" textLength="37.2" lengthAdjust="spacingAndGlyphs" font-size="11.6" font-weight="bold">Notes:</text>
<text x="702.2" y="555.4" textLength="113.8" lengthAdjust="spacingAndGlyphs" font-size="11.6" font-weight="bold">mia_material_x1SG</text>
<rect x="646.5" y="569.5" width="376" height="72" fill="#fff" stroke="#cfcfcf" stroke-width="1"/>
<rect x="647" y="628.6" width="363" height="12.6" fill="url(#hsb)"/>
<rect x="1010" y="570" width="13" height="58.6" fill="url(#sbtrack)"/>
<rect x="1010" y="628.6" width="13" height="13" fill="#ededed"/>
<rect x="638" y="641.5" width="385" height="6" fill="#e4e4e4"/>
<rect x="642.5" y="648.5" width="125.5" height="22" fill="url(#btn)" stroke="#9a9a9a" stroke-width="1"/>
<path d="M642.5,671.5 H768.0" stroke="#c8c8c8" stroke-width="1"/>
<rect x="770.5" y="648.5" width="129" height="22" fill="url(#btn)" stroke="#9a9a9a" stroke-width="1"/>
<path d="M770.5,671.5 H899.5" stroke="#c8c8c8" stroke-width="1"/>
<rect x="901.5" y="648.5" width="125" height="22" fill="url(#btn)" stroke="#9a9a9a" stroke-width="1"/>
<path d="M901.5,671.5 H1026.5" stroke="#c8c8c8" stroke-width="1"/>
<text x="690.8" y="663.1" textLength="28.4" lengthAdjust="spacingAndGlyphs">Select</text>
<text x="797.4" y="663.1" textLength="74.1" lengthAdjust="spacingAndGlyphs">Load Attributes</text>
<text x="942.3" y="663.1" textLength="45.5" lengthAdjust="spacingAndGlyphs">Copy Tab</text>
</svg>
</div>
</body></html>
